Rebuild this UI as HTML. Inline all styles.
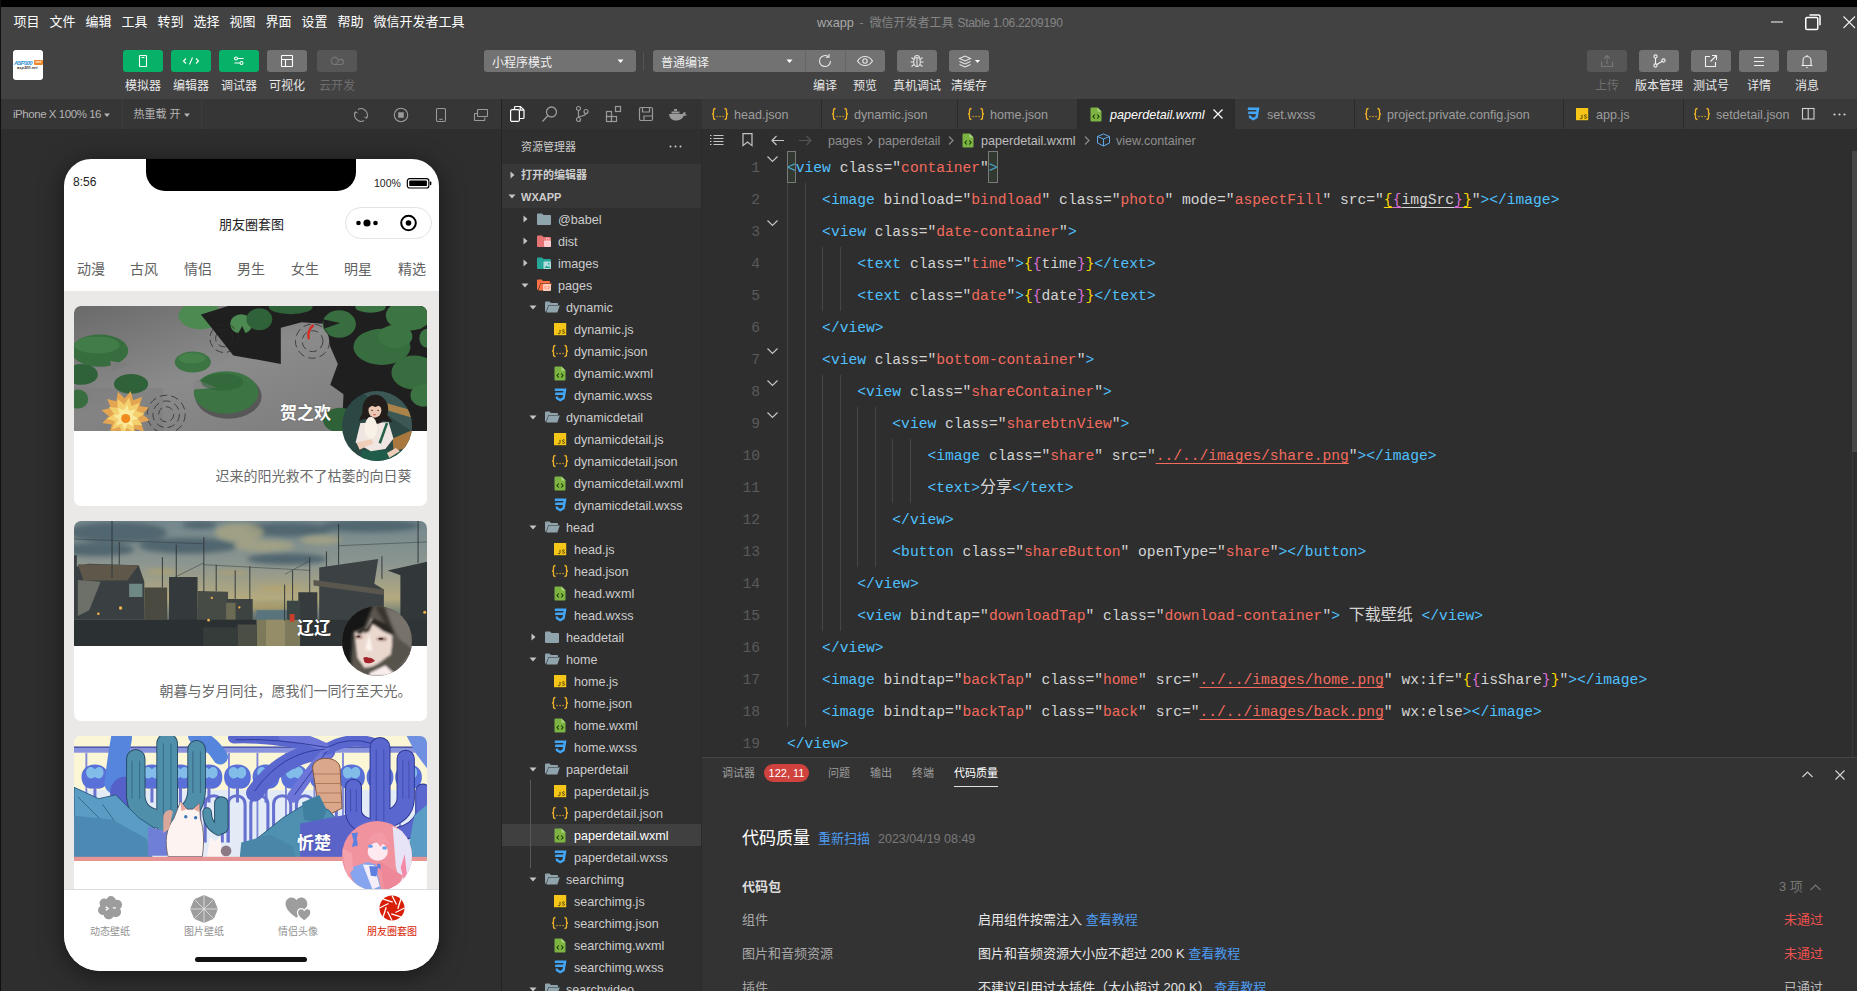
<!DOCTYPE html>
<html lang="zh"><head><meta charset="utf-8"><title>wxapp - 微信开发者工具 Stable 1.06.2209190</title>
<style>
*{box-sizing:border-box;margin:0;padding:0}
html,body{width:1857px;height:991px;overflow:hidden;background:#2e2e2e}
body{position:relative;font-family:"Liberation Sans","Noto Sans CJK SC",sans-serif;font-size:13px;color:#ccc;-webkit-font-smoothing:antialiased}
.abs{position:absolute}
.t{position:absolute;white-space:nowrap;line-height:1}
svg{position:absolute;overflow:visible}
#top{left:0;top:0;width:1857px;height:7px;background:#000}
#left{left:0;top:0;width:1px;height:991px;background:#111}
#bar{left:1px;top:7px;width:1856px;height:92px;background:#424242}
.menu{top:15px;font-size:13px;color:#fff;line-height:14px}
.tb{top:50px;width:40px;height:22px;border-radius:3px;background:#727272}
.tb.g{background:#07b168}
.tb.d{background:#565656}
.tl{top:78.5px;font-size:12px;color:#e8e8e8;line-height:14px;width:80px;text-align:center}
.tl.d{color:#6e6e6e}
.sel{top:50px;height:22px;border-radius:3px;background:#727272;font-size:12px;color:#f0f0f0;line-height:26px;padding-left:8px}
#simbar{left:1px;top:99px;width:500px;height:30px;background:#363636}
#sim{left:1px;top:129px;width:500px;height:862px;background:#2e2e2e}
#div1{left:501px;top:99px;width:1px;height:892px;background:#232323}
#act{left:502px;top:99px;width:200px;height:30px;background:#333}
#exp{left:502px;top:129px;width:200px;height:862px;background:#2f2f2f}
.row{left:0;width:200px;height:22px;font-size:12.6px;color:#ccc;line-height:22px}
#edtabs{left:702px;top:99px;width:1155px;height:30px;background:#393939}
.tab{top:0;height:30px;background:#393939;border-right:1px solid #2b2b2b;font-size:13px;color:#9d9d9d;line-height:30px}
.tab.a{background:#2e2e2e;color:#fff;font-style:italic}
#ed{left:702px;top:129px;width:1155px;height:628px;background:#2e2e2e}
.ln{left:0;width:58px;text-align:right;font-family:"Liberation Mono","Noto Sans CJK SC",monospace;font-size:14.63px;color:#5a5a5a;line-height:32px;height:32px}
.cl{left:85px;font-family:"Liberation Mono","Noto Sans CJK SC",monospace;font-size:14.63px;color:#d4d4d4;line-height:32px;height:32px;white-space:pre}
.tg{color:#4fc1ff}.st{color:#f36b5d}.y{color:#ffd700}.p{color:#da70d6}.u{text-decoration:underline;text-underline-offset:3px}
.ig{background:#454545;width:1px}
#dbg{left:702px;top:757px;width:1155px;height:234px;background:#333;border-top:1px solid #454545}
.lk{color:#4d9bf0}
</style></head><body>
<div id="top" class="abs"></div><div id="bar" class="abs"></div><div class="t menu" style="left:13.5px">项目</div><div class="t menu" style="left:49.5px">文件</div><div class="t menu" style="left:85.5px">编辑</div><div class="t menu" style="left:121.5px">工具</div><div class="t menu" style="left:157.5px">转到</div><div class="t menu" style="left:193.5px">选择</div><div class="t menu" style="left:229.5px">视图</div><div class="t menu" style="left:265.5px">界面</div><div class="t menu" style="left:301.5px">设置</div><div class="t menu" style="left:337.5px">帮助</div><div class="t menu" style="left:373.5px">微信开发者工具</div><div class="t" style="left:817px;top:15.5px;font-size:12.8px;line-height:14px;color:#a8a8a8">wxapp</div><div class="t" style="left:859.5px;top:15.5px;font-size:12px;line-height:14px;color:#858585">-</div><div class="t" style="left:869.5px;top:15.5px;font-size:12px;line-height:14px;color:#858585">微信开发者工具</div><div class="t" style="left:957.5px;top:15.5px;font-size:12px;letter-spacing:-0.3px;line-height:14px;color:#858585">Stable 1.06.2209190</div><svg style="left:1765px;top:10px" width="92" height="26" viewBox="0 0 92 26" fill="none" stroke="#fff" stroke-width="1.5"><path d="M6 12h12" stroke="#aaa" stroke-width="1.8"/><rect x="40.75" y="7.5" width="12" height="12" rx="1.3"/><path d="M44.500 5H53.500a1.500 1.500 0 0 1 1.500 1.500V15.200"/><path d="M78.500 6.500l11.500 11.500M90 6.500l-11.500 11.500" stroke-width="1.1" stroke="#eee"/></svg><div class="abs" style="left:13px;top:50px;width:30px;height:30px;background:#fff;border-radius:3px"></div><div class="t" style="left:14px;top:59.5px;font-size:6px;font-weight:bold;font-style:italic;color:#2f93d2;letter-spacing:-0.75px">ASP300</div><div class="abs" style="left:34px;top:59.5px;width:9px;height:5.5px;background:#f0862a;border-radius:1px"></div><div class="t" style="left:35px;top:60.5px;font-size:3.5px;font-weight:bold;font-style:italic;color:#fff">.net</div><div class="t" style="left:17px;top:66px;font-size:4px;color:#333;font-style:italic;font-weight:bold">asp300.net</div><div class="abs tb g" style="left:123px"><svg width="40" height="22" viewBox="0 0 40 22" fill="none" stroke="#fff" stroke-width="1.1"><rect x="16.5" y="5.500" width="7" height="11" rx="0.5"/><path d="M18.500 7.500h3"/></svg></div><div class="t tl " style="left:103px">模拟器</div><div class="abs tb g" style="left:171px"><svg width="40" height="22" viewBox="0 0 40 22" fill="none" stroke="#fff" stroke-width="1.1"><path d="M15 8.500l-2.500 2.500 2.500 2.500M25 8.500l2.500 2.500-2.500 2.500M21.500 7.500l-3 7"/></svg></div><div class="t tl " style="left:151px">编辑器</div><div class="abs tb g" style="left:219px"><svg width="40" height="22" viewBox="0 0 40 22" fill="none" stroke="#fff" stroke-width="1.1"><path d="M18.6 8.500h6M15.500 13h5.400"/><circle cx="17" cy="8.500" r="1.500"/><circle cx="22.500" cy="13" r="1.500"/></svg></div><div class="t tl " style="left:199px">调试器</div><div class="abs tb " style="left:267px"><svg width="40" height="22" viewBox="0 0 40 22" fill="none" stroke="#fff" stroke-width="1.1"><rect x="14.500" y="5.500" width="11" height="11" rx="0.500"/><path d="M14.500 9.500h11M18.500 9.500v7"/></svg></div><div class="t tl " style="left:247px">可视化</div><div class="abs tb d" style="left:317px"><svg width="40" height="22" viewBox="0 0 40 22" fill="none" stroke="#777" stroke-width="1.1"><path d="M21.300 11.200a3.600 3.600 0 1 0-3 3.300h5.700a2.600 2.600 0 1 0-2.700-3.300c-.5 1.500-1.500 2.500-3 3.300"/></svg></div><div class="t tl d" style="left:297px">云开发</div><div class="abs sel" style="left:484px;width:152px">小程序模式</div><svg style="left:617px;top:59px" width="8" height="5"><path d="M0.500 0.500h6l-3 3.500z" fill="#fff"/></svg><div class="abs" style="left:643px;top:52px;width:1px;height:18px;background:#555"></div><div class="abs sel" style="left:653px;width:232px">普通编译</div><svg style="left:786px;top:59px" width="8" height="5"><path d="M0.500 0.500h6l-3 3.500z" fill="#fff"/></svg><div class="abs" style="left:805px;top:50px;width:1px;height:22px;background:#666"></div><div class="abs" style="left:845px;top:50px;width:1px;height:22px;background:#666"></div><svg style="left:805px;top:51px" width="40" height="20" viewBox="0 0 40 20" fill="none" stroke="#e6e6e6" stroke-width="1.100"><path d="M25.500 10a5.500 5.500 0 1 1-2-4.200"/><path d="M24 3v3.200h-3.200"/></svg><svg style="left:845px;top:51px" width="40" height="20" viewBox="0 0 40 20" fill="none" stroke="#e6e6e6" stroke-width="1.100"><path d="M12.500 10c2-3.300 5-4.500 7.500-4.500s5.500 1.200 7.500 4.500c-2 3.300-5 4.500-7.500 4.500s-5.500-1.200-7.500-4.500z"/><circle cx="20" cy="10" r="2.200"/></svg><div class="abs tb" style="left:897px"><svg style="top:1px" width="40" height="20" viewBox="0 0 40 20" fill="none" stroke="#e6e6e6" stroke-width="1.100"><ellipse cx="20" cy="11" rx="3.300" ry="4.500"/><path d="M17.500 7a2.500 2.500 0 0 1 5 0M16.700 11h-3.200M23.300 11h3.200M17 8.500l-2.500-2M23 8.500l2.500-2M17 13.500l-2.500 2M23 13.500l2.500 2M20 6.500v9"/></svg></div><div class="abs tb" style="left:949px"><svg style="top:1px" width="40" height="20" viewBox="0 0 40 20" fill="none" stroke="#e6e6e6" stroke-width="1.100"><path d="M10.500 7.500l5.500-2.500 5.500 2.500-5.500 2.500zM10.500 10.500l5.500 2.500 5.500-2.500M10.500 13.500l5.500 2.500 5.500-2.500"/><path d="M26 9h5l-2.500 3z" fill="#fff" stroke="none"/></svg></div><div class="t tl" style="left:785px">编译</div><div class="t tl" style="left:825px">预览</div><div class="t tl" style="left:877px">真机调试</div><div class="t tl" style="left:929px">清缓存</div><div class="abs tb d" style="left:1587px"><svg width="40" height="22" viewBox="0 0 40 22" fill="none" stroke="#777" stroke-width="1.100"><path d="M14.500 11.500v5h11v-5M20 14v-8M17 8.500l3-3 3 3"/></svg></div><div class="t tl d" style="left:1567px">上传</div><div class="abs tb " style="left:1639px"><svg width="40" height="22" viewBox="0 0 40 22" fill="none" stroke="#f0f0f0" stroke-width="1.100"><circle cx="16.500" cy="6.500" r="1.600"/><circle cx="16.500" cy="15.500" r="1.600"/><circle cx="24.500" cy="10.500" r="1.600"/><path d="M16.500 8.100v5.800M17.800 14.500l5.500-3.200"/></svg></div><div class="t tl " style="left:1619px">版本管理</div><div class="abs tb " style="left:1691px"><svg width="40" height="22" viewBox="0 0 40 22" fill="none" stroke="#f0f0f0" stroke-width="1.100"><path d="M19 6.500h-4.500v10h10v-4.500M21 5.500h4.500v4.500M25.500 5.500l-6 6"/></svg></div><div class="t tl " style="left:1671px">测试号</div><div class="abs tb " style="left:1739px"><svg width="40" height="22" viewBox="0 0 40 22" fill="none" stroke="#f0f0f0" stroke-width="1.100"><path d="M15 7.500h10M15 11.500h10M15 15.500h10"/></svg></div><div class="t tl " style="left:1719px">详情</div><div class="abs tb " style="left:1787px"><svg width="40" height="22" viewBox="0 0 40 22" fill="none" stroke="#f0f0f0" stroke-width="1.100"><path d="M14.500 15.500h11M16 15.500v-5a4 4 0 0 1 8 0v5M20 6.500v-1.500M19.300 17.500h1.400"/></svg></div><div class="t tl " style="left:1767px">消息</div><div id="simbar" class="abs"></div><div id="sim" class="abs"></div><div id="div1" class="abs"></div><div class="t" style="left:13px;top:108px;font-size:11.5px;letter-spacing:-0.45px;color:#b4b4b4;line-height:12px">iPhone X 100% 16</div><svg style="left:104px;top:112.5px" width="7" height="5"><path d="M0 0.500h6l-3 3.500z" fill="#b4b4b4"/></svg><div class="abs" style="left:122px;top:99px;width:1px;height:30px;background:#3d3d3d"></div><div class="abs" style="left:201px;top:99px;width:1px;height:30px;background:#3d3d3d"></div><div class="t" style="left:133.5px;top:107px;font-size:11px;color:#b4b4b4;line-height:14px">热重载 开</div><svg style="left:183.5px;top:112.5px" width="7" height="5"><path d="M0 0.500h6l-3 3.500z" fill="#b4b4b4"/></svg><svg style="left:353px;top:107px" width="16" height="16" viewBox="0 0 16 16" fill="none" stroke="#9a9a9a" stroke-width="1.1"><path d="M4.85 2.54A6.3 6.3 0 0 1 13.46 11.15M11.15 13.46A6.3 6.3 0 0 1 2.54 4.85"/><path d="M11.4 10.1l2.1 1.2 1.2-2.1M1.3 6.9l1.2-2.1 2.1 1.2" stroke-width="1"/></svg><svg style="left:393px;top:107px" width="16" height="16" viewBox="0 0 16 16" fill="none" stroke="#9a9a9a" stroke-width="1.1"><circle cx="8" cy="8" r="6.7"/><rect x="5.2" y="5.2" width="5.6" height="5.6" rx="0.5" fill="#9a9a9a" stroke="none"/></svg><svg style="left:433px;top:107px" width="16" height="16" viewBox="0 0 16 16" fill="none" stroke="#9a9a9a" stroke-width="1.1"><rect x="3.5" y="1.5" width="9" height="13" rx="1.2"/><path d="M6.3 12.3h3.4"/></svg><svg style="left:473px;top:107px" width="16" height="16" viewBox="0 0 16 16" fill="none" stroke="#9a9a9a" stroke-width="1.1"><rect x="4.5" y="2.5" width="10" height="7" rx="0.6"/><path d="M4 6.5h-2a.5.5 0 0 0-.5.5v6a.5.5 0 0 0 .5.5h9.300a.5.5 0 0 0 .5-.5v-2.500"/></svg><div class="abs" id="phone" style="left:64px;top:159px;width:375px;height:812px;background:#fff;border-radius:27px 27px 36px 36px;overflow:hidden;box-shadow:0 4px 24px rgba(0,0,0,.5)"><div class="abs" style="left:82px;top:0;width:210px;height:32px;background:#000;border-radius:0 0 19px 19px"></div><div class="t" style="left:9px;top:17px;font-size:12px;color:#222;line-height:12px">8:56</div><div class="t" style="left:310px;top:18.500px;font-size:10.500px;color:#222;line-height:11px">100%</div><svg style="left:342px;top:18.5px" width="27" height="11" viewBox="0 0 28 12"><rect x="0.700" y="0.700" width="23.500" height="10.200" rx="2.500" fill="none" stroke="#000" stroke-width="1.300"/><rect x="2.800" y="2.800" width="19.300" height="6" rx="1" fill="#000"/><rect x="25.300" y="3.800" width="1.600" height="4" rx="0.800" fill="#000"/></svg><div class="t" style="left:0;width:375px;text-align:center;top:59px;font-size:13px;color:#222;line-height:14px">朋友圈套图</div><div class="abs" style="left:281px;top:48px;width:87px;height:32px;border:1px solid #e3e3e3;border-radius:16px"></div><svg style="left:281px;top:48px" width="87" height="32" viewBox="0 0 87 32"><circle cx="13.500" cy="16" r="2.300" fill="#000"/><circle cx="22" cy="16" r="3.600" fill="#000"/><circle cx="30.500" cy="16" r="2.300" fill="#000"/><circle cx="63.500" cy="16" r="7.300" fill="none" stroke="#000" stroke-width="2"/><circle cx="63.500" cy="16" r="2.800" fill="#000"/></svg><div class="t" style="left:13px;top:102px;font-size:14px;color:#626262;line-height:16px">动漫</div><div class="t" style="left:66px;top:102px;font-size:14px;color:#626262;line-height:16px">古风</div><div class="t" style="left:120px;top:102px;font-size:14px;color:#626262;line-height:16px">情侣</div><div class="t" style="left:173px;top:102px;font-size:14px;color:#626262;line-height:16px">男生</div><div class="t" style="left:227px;top:102px;font-size:14px;color:#626262;line-height:16px">女生</div><div class="t" style="left:280px;top:102px;font-size:14px;color:#626262;line-height:16px">明星</div><div class="t" style="left:334px;top:102px;font-size:14px;color:#626262;line-height:16px">精选</div><div class="abs" style="left:0;top:132px;width:375px;height:600px;background:#ebe9e7"></div><div class="abs" style="left:10px;top:147px;width:353px;height:200px;background:#fff;border-radius:7px;overflow:hidden"><svg style="left:0;top:0;overflow:hidden" width="353" height="125" viewBox="0 0 1857 658" preserveAspectRatio="none"><defs><linearGradient id="p1" x1="0" y1="0" x2="1" y2="1"><stop offset="0" stop-color="#6a6a6a"/><stop offset=".45" stop-color="#8b8b8b"/><stop offset="1" stop-color="#787878"/></linearGradient></defs>
<rect width="1857" height="658" fill="url(#p1)"/>
<path d="M0 430h470v228h-470z" fill="#767676" opacity=".35"/>
<ellipse cx="665" cy="50" rx="115" ry="72" fill="#4c8a52"/>
<path d="M668 45l60 75 110 140 250 45v-190l110-30 130 10 20 120 40 90-40 110 70 50-10 200h460v-670h-1040z" fill="#1f1f1f"/>
<path d="M668 45l90 40-10 50z" fill="#1f1f1f"/>
<ellipse cx="880" cy="95" rx="58" ry="52" fill="#4c8a52"/><ellipse cx="975" cy="70" rx="68" ry="58" fill="#2f6238"/>
<path d="M860 150l25-45 20 45z" fill="#1f1f1f"/>
<ellipse cx="1140" cy="5" rx="115" ry="38" fill="#2f6238"/>
<ellipse cx="1395" cy="95" rx="88" ry="72" fill="#386e3f"/><path d="M1310 70l90 20-85 30z" fill="#1f1f1f"/>
<ellipse cx="1560" cy="5" rx="80" ry="30" fill="#3c7443"/>
<ellipse cx="1760" cy="50" rx="120" ry="80" fill="#3c7443"/>
<ellipse cx="1620" cy="215" rx="150" ry="95" fill="#386e3f"/><ellipse cx="1690" cy="160" rx="90" ry="60" fill="#3c7443"/>
<ellipse cx="1857" cy="170" rx="40" ry="50" fill="#3c7443"/>
<ellipse cx="1790" cy="350" rx="120" ry="90" fill="#386e3f"/><ellipse cx="1840" cy="470" rx="70" ry="60" fill="#3c7443"/>
<ellipse cx="1400" cy="600" rx="90" ry="65" fill="#2f6238"/>
<ellipse cx="135" cy="235" rx="150" ry="85" fill="#386e3f"/><ellipse cx="120" cy="205" rx="120" ry="45" fill="#4c8a52" opacity=".5"/>
<path d="M190 290l100 15-90 40z" fill="#7d7d7d"/>
<ellipse cx="40" cy="360" rx="85" ry="55" fill="#2f6238"/>
<ellipse cx="300" cy="410" rx="90" ry="52" fill="#2f6238"/>
<ellipse cx="20" cy="490" rx="55" ry="50" fill="#386e3f"/>
<ellipse cx="625" cy="295" rx="95" ry="55" fill="#3c7443"/><ellipse cx="620" cy="275" rx="70" ry="28" fill="#4c8a52" opacity=".6"/>
<ellipse cx="800" cy="465" rx="175" ry="118" fill="#2a2a2a" opacity=".5" transform="translate(12,10)"/>
<ellipse cx="800" cy="455" rx="170" ry="112" fill="#3c7443"/><path d="M640 385l110 45-120 10z" fill="#858585"/>
<ellipse cx="780" cy="400" rx="110" ry="45" fill="#2f6238" opacity=".6"/>
<g fill="none" stroke="#2a2a2a" stroke-width="5" stroke-dasharray="40 22" opacity=".8"><circle cx="790" cy="170" r="45"/><circle cx="790" cy="170" r="75"/><circle cx="1255" cy="185" r="55"/><circle cx="1255" cy="185" r="90"/><circle cx="485" cy="570" r="40"/><circle cx="485" cy="570" r="70"/><circle cx="485" cy="570" r="100"/></g>
<path d="M1260 100c-25 20-30 50-25 75" stroke="#d42a20" stroke-width="12" fill="none"/>
<g><path d="M399 601L351 614L369 661L321 648L313 698L277 663L246 702L233 654L186 672L199 624L149 616L184 580L145 549L193 536L175 489L223 502L231 452L267 487L298 448L311 496L358 478L345 526L395 534L360 570z" fill="#e4a552"/><path d="M360 628L315 625L315 670L280 641L254 678L242 634L199 649L216 607L173 593L211 569L184 532L229 535L229 490L264 519L290 482L302 526L345 511L328 553L371 567L333 591z" fill="#f3cf6e"/><path d="M338 592L305 603L314 636L283 621L265 651L254 618L221 627L236 596L206 578L239 567L230 534L261 549L279 519L290 552L323 543L308 574z" fill="#fae99a"/><circle cx="272" cy="592" r="24" fill="#f08a1c"/></g></svg><div class="t" style="right:96px;top:99px;font-size:17px;font-weight:bold;color:#fff;line-height:18px;text-shadow:0 0 2px rgba(0,0,0,.25)">贺之欢</div><div class="t" style="right:15.5px;top:162px;font-size:14px;color:#6a6a6a;line-height:16px">迟来的阳光救不了枯萎的向日葵</div><svg style="left:268px;top:85px;overflow:hidden;border-radius:35px" width="70" height="70" viewBox="62 62 868 868"><rect x="0" y="0" width="991" height="991" fill="#2c4844"/>
<path d="M300 62h630v500l-300-200z" fill="#3b5856"/>
<path d="M615 215l280 75 25 100-300-90z" fill="#a98349"/><path d="M690 650l240-100v200l-230 60z" fill="#a8783f"/>
<path d="M300 800h500v130h-500z" fill="#1f5c49"/>
<path d="M290 460l350-10 60 200-100 130-180 30-190-110z" fill="#efe6e2"/>
<path d="M620 460l-90 250" stroke="#24604a" stroke-width="32"/>
<ellipse cx="475" cy="290" rx="160" ry="180" fill="#221d1b"/><path d="M330 300l-60 130 90-30zM600 330l90 120-110-20z" fill="#221d1b"/>
<ellipse cx="470" cy="305" rx="80" ry="88" fill="#ecc7b4"/><path d="M385 215h180l-10 50-40-20-40 15-40-15-40 25z" fill="#221d1b"/><ellipse cx="435" cy="300" rx="12" ry="7" fill="#3a2a26"/><ellipse cx="510" cy="300" rx="12" ry="7" fill="#3a2a26"/><ellipse cx="465" cy="355" rx="20" ry="9" fill="#d8605a"/>
<ellipse cx="420" cy="520" rx="78" ry="140" fill="#f8f1e6"/>
<path d="M240 700l190-40 20 50-170 80z" fill="#f0cdb8"/><path d="M620 830l110-60 50 40-130 80z" fill="#f0cdb8"/></svg></div><div class="abs" style="left:10px;top:362px;width:353px;height:200px;background:#fff;border-radius:7px;overflow:hidden"><svg style="left:0;top:0;overflow:hidden" width="353" height="125" viewBox="0 0 1857 658" preserveAspectRatio="none"><defs><linearGradient id="p2" x1="0" y1="0" x2="0" y2="1"><stop offset="0" stop-color="#73878d"/><stop offset=".35" stop-color="#8d9690"/><stop offset=".62" stop-color="#b4aa7e"/><stop offset=".75" stop-color="#6c7a78"/><stop offset="1" stop-color="#3a4040"/></linearGradient></defs>
<rect width="1857" height="658" fill="url(#p2)"/>
<filter id="bl2"><feGaussianBlur stdDeviation="14"/></filter><g fill="#51666f" filter="url(#bl2)"><ellipse cx="230" cy="60" rx="260" ry="55"/><ellipse cx="600" cy="130" rx="260" ry="42"/><ellipse cx="660" cy="20" rx="90" ry="22"/><ellipse cx="1130" cy="45" rx="230" ry="36"/><ellipse cx="1560" cy="25" rx="260" ry="34"/><ellipse cx="1120" cy="200" rx="210" ry="30"/><ellipse cx="120" cy="150" rx="200" ry="35"/></g>
<g fill="#a9a583" opacity=".8" filter="url(#bl2)"><ellipse cx="870" cy="60" rx="130" ry="50"/><ellipse cx="1000" cy="130" rx="160" ry="30"/><ellipse cx="1300" cy="100" rx="110" ry="25"/></g>
<g fill="#c0a65e" opacity=".7" filter="url(#bl2)"><ellipse cx="460" cy="265" rx="80" ry="10"/><ellipse cx="1080" cy="355" rx="110" ry="10"/><ellipse cx="1000" cy="450" rx="200" ry="14"/><ellipse cx="830" cy="270" rx="90" ry="8"/></g>
<path d="M960 470h190v60h-190z" fill="#5a747d"/>
<path d="M960 520h230v138h-230z" fill="#7d7a5c"/><path d="M1010 520h100v138h-100z" fill="#9a926a" opacity=".8"/>
<path d="M0 180h15v60l60-15 265 8 30 85v200h-370z" fill="#3a4042"/><path d="M20 228l320 5-60 80h-230z" fill="#5f584a"/><path d="M20 310l120 10-60 150-60 30z" fill="#6d7069"/>
<path d="M290 330h70v70h-70z" fill="#6d8885"/>
<path d="M370 350h120v170h-120z" fill="#4b4a40"/>
<path d="M500 295h150v230h-150z" fill="#343a3c"/>
<path d="M650 368l160 5v150h-160z" fill="#464b45"/><path d="M800 410h140v130h-140z" fill="#3d4341"/><path d="M800 430h50v90h-50z" fill="#6a6a55"/>
<path d="M1290 245l310-45-20 130 50 30v180h-340z" fill="#3c4244"/><path d="M1260 310l370 50v30l-370-50z" fill="#5a574e"/>
<path d="M1180 375h100v150h-100z" fill="#363c3e"/><path d="M1120 420h70v100h-70z" fill="#3b4543"/>
<path d="M1650 260l207-45v340h-140v-270z" fill="#32383a"/>
<path d="M0 520h960v138h-960z" fill="#2b3133"/><path d="M1190 520h667v138h-667z" fill="#2f3537"/>
<path d="M860 545h100v113h-100z" fill="#4a4e45"/><path d="M680 560h180v98h-180z" fill="#363c3a"/>
<g stroke="#30373a" stroke-width="5"><path d="M200 0v300M238 110v120M465 190v160M538 125v170M683 85v290M748 230v140M848 260v150M925 238v180M1108 335v190M1150 260v160M1240 190v190M1328 160v85M1392 15v215M1620 185v120M1810 0v220"/></g>
<g stroke="#30373a" stroke-width="2.500" fill="none"><path d="M0 95l683 25M683 220l-180 90M683 230l560 30M1392 130l465-20M1240 210l-130 70"/></g>
<g fill="#f0b050"><circle cx="245" cy="458" r="9"/><circle cx="128" cy="488" r="7"/><circle cx="708" cy="522" r="7"/><circle cx="1845" cy="480" r="8"/><circle cx="870" cy="455" r="6"/><circle cx="725" cy="405" r="6"/></g>
<path d="M1135 490h25v40h-25z" fill="#c8402c"/></svg><div class="t" style="right:96px;top:99px;font-size:17px;font-weight:bold;color:#fff;line-height:18px;text-shadow:0 0 2px rgba(0,0,0,.25)">辽辽</div><div class="t" style="right:15.5px;top:162px;font-size:14px;color:#6a6a6a;line-height:16px">朝暮与岁月同往，愿我们一同行至天光。</div><svg style="left:268px;top:85px;overflow:hidden;border-radius:35px" width="70" height="70" viewBox="62 62 868 868"><defs><filter id="b2"><feGaussianBlur stdDeviation="10"/></filter><filter id="b2b"><feGaussianBlur stdDeviation="22"/></filter></defs>
<rect x="0" y="0" width="991" height="991" fill="#5b564e"/>
<g filter="url(#b2b)"><path d="M0 0h470l-130 330-140 60-30 420-170 181z" fill="#161412"/><path d="M560 62l370 150v718h-230l60-480z" fill="#77726a"/><path d="M470 62h120l130 360-60-20z" fill="#3a352f"/></g>
<g filter="url(#b2)"><path d="M215 385l140-30 70-140 130 150 130 60-5 230-210 150-130 30-90-130z" fill="#ead8cf"/>
<path d="M350 600l50-190 40 210z" fill="#fdf4ef"/>
<path d="M440 215l-110 190 70-30 40-90 150 95 110 45-70-130z" fill="#2a2622"/>
<path d="M228 395l110-60 30 20-80 60z" fill="#2a2622"/>
<ellipse cx="270" cy="445" rx="50" ry="20" fill="#9a7468"/><ellipse cx="555" cy="470" rx="65" ry="22" fill="#9a7468"/>
<path d="M700 420l-40 290-260 120-60 100h360l240-330z" fill="#57524b"/>
<path d="M410 890l190-90 140 130h-340z" fill="#f8edea"/></g>
<path d="M325 705c30-15 50-10 70 0 25-5 50 10 75 35-40 35-100 40-130 20z" fill="#a3252b"/>
<ellipse cx="265" cy="440" rx="24" ry="12" fill="#4a3a34"/><ellipse cx="545" cy="468" rx="30" ry="13" fill="#4a3a34"/></svg></div><div class="abs" style="left:10px;top:577px;width:353px;height:200px;background:#fff;border-radius:7px;overflow:hidden"><svg style="left:0;top:0;overflow:hidden" width="353" height="125" viewBox="0 0 1857 658" preserveAspectRatio="none"><rect width="1857" height="658" fill="#fbf6d6"/>
<rect y="285" width="1857" height="373" fill="#e3ebf7"/>
<rect y="62" width="1857" height="26" fill="#8a94de"/><rect y="55" width="1857" height="8" fill="#4a55a8"/>
<path d="M60 90h10v470h-10z" fill="#7f88d6"/><path d="M210 90h10v470h-10z" fill="#7f88d6"/><path d="M360 90h10v470h-10z" fill="#7f88d6"/><path d="M510 90h10v470h-10z" fill="#7f88d6"/><path d="M660 90h10v470h-10z" fill="#7f88d6"/><path d="M810 90h10v470h-10z" fill="#7f88d6"/><path d="M960 90h10v470h-10z" fill="#7f88d6"/><path d="M1110 90h10v470h-10z" fill="#7f88d6"/><path d="M1260 90h10v470h-10z" fill="#7f88d6"/><path d="M1410 90h10v470h-10z" fill="#7f88d6"/><path d="M1560 90h10v470h-10z" fill="#7f88d6"/><path d="M1710 90h10v470h-10z" fill="#7f88d6"/><g transform="translate(110,0)"><path d="M0 150c-45 0-75 30-70 75 5 40 35 60 70 50 35 10 65-10 70-50 5-45-25-75-70-75z" fill="#5870d8"/><path d="M0 175c-25-25-50-5-45 25 5 25 30 30 45 15 15 15 40 10 45-15 5-30-20-50-45-25z" fill="#82bdea"/><path d="M-8 270h16v80h-16z" fill="#6a74d0"/></g><g transform="translate(260,0)"><path d="M0 150c-45 0-75 30-70 75 5 40 35 60 70 50 35 10 65-10 70-50 5-45-25-75-70-75z" fill="#5870d8"/><path d="M0 175c-25-25-50-5-45 25 5 25 30 30 45 15 15 15 40 10 45-15 5-30-20-50-45-25z" fill="#82bdea"/><path d="M-8 270h16v80h-16z" fill="#6a74d0"/></g><g transform="translate(410,0)"><path d="M0 150c-45 0-75 30-70 75 5 40 35 60 70 50 35 10 65-10 70-50 5-45-25-75-70-75z" fill="#5870d8"/><path d="M0 175c-25-25-50-5-45 25 5 25 30 30 45 15 15 15 40 10 45-15 5-30-20-50-45-25z" fill="#82bdea"/><path d="M-8 270h16v80h-16z" fill="#6a74d0"/></g><g transform="translate(560,0)"><path d="M0 150c-45 0-75 30-70 75 5 40 35 60 70 50 35 10 65-10 70-50 5-45-25-75-70-75z" fill="#5870d8"/><path d="M0 175c-25-25-50-5-45 25 5 25 30 30 45 15 15 15 40 10 45-15 5-30-20-50-45-25z" fill="#82bdea"/><path d="M-8 270h16v80h-16z" fill="#6a74d0"/></g><g transform="translate(710,0)"><path d="M0 150c-45 0-75 30-70 75 5 40 35 60 70 50 35 10 65-10 70-50 5-45-25-75-70-75z" fill="#5870d8"/><path d="M0 175c-25-25-50-5-45 25 5 25 30 30 45 15 15 15 40 10 45-15 5-30-20-50-45-25z" fill="#82bdea"/><path d="M-8 270h16v80h-16z" fill="#6a74d0"/></g><g transform="translate(860,0)"><path d="M0 150c-45 0-75 30-70 75 5 40 35 60 70 50 35 10 65-10 70-50 5-45-25-75-70-75z" fill="#5870d8"/><path d="M0 175c-25-25-50-5-45 25 5 25 30 30 45 15 15 15 40 10 45-15 5-30-20-50-45-25z" fill="#82bdea"/><path d="M-8 270h16v80h-16z" fill="#6a74d0"/></g><g transform="translate(1010,0)"><path d="M0 150c-45 0-75 30-70 75 5 40 35 60 70 50 35 10 65-10 70-50 5-45-25-75-70-75z" fill="#5870d8"/><path d="M0 175c-25-25-50-5-45 25 5 25 30 30 45 15 15 15 40 10 45-15 5-30-20-50-45-25z" fill="#82bdea"/><path d="M-8 270h16v80h-16z" fill="#6a74d0"/></g><g transform="translate(1160,0)"><path d="M0 150c-45 0-75 30-70 75 5 40 35 60 70 50 35 10 65-10 70-50 5-45-25-75-70-75z" fill="#5870d8"/><path d="M0 175c-25-25-50-5-45 25 5 25 30 30 45 15 15 15 40 10 45-15 5-30-20-50-45-25z" fill="#82bdea"/><path d="M-8 270h16v80h-16z" fill="#6a74d0"/></g><g transform="translate(1310,0)"><path d="M0 150c-45 0-75 30-70 75 5 40 35 60 70 50 35 10 65-10 70-50 5-45-25-75-70-75z" fill="#5870d8"/><path d="M0 175c-25-25-50-5-45 25 5 25 30 30 45 15 15 15 40 10 45-15 5-30-20-50-45-25z" fill="#82bdea"/><path d="M-8 270h16v80h-16z" fill="#6a74d0"/></g><g transform="translate(1460,0)"><path d="M0 150c-45 0-75 30-70 75 5 40 35 60 70 50 35 10 65-10 70-50 5-45-25-75-70-75z" fill="#5870d8"/><path d="M0 175c-25-25-50-5-45 25 5 25 30 30 45 15 15 15 40 10 45-15 5-30-20-50-45-25z" fill="#82bdea"/><path d="M-8 270h16v80h-16z" fill="#6a74d0"/></g><g transform="translate(1610,0)"><path d="M0 150c-45 0-75 30-70 75 5 40 35 60 70 50 35 10 65-10 70-50 5-45-25-75-70-75z" fill="#5870d8"/><path d="M0 175c-25-25-50-5-45 25 5 25 30 30 45 15 15 15 40 10 45-15 5-30-20-50-45-25z" fill="#82bdea"/><path d="M-8 270h16v80h-16z" fill="#6a74d0"/></g><g transform="translate(1760,0)"><path d="M0 150c-45 0-75 30-70 75 5 40 35 60 70 50 35 10 65-10 70-50 5-45-25-75-70-75z" fill="#5870d8"/><path d="M0 175c-25-25-50-5-45 25 5 25 30 30 45 15 15 15 40 10 45-15 5-30-20-50-45-25z" fill="#82bdea"/><path d="M-8 270h16v80h-16z" fill="#6a74d0"/></g><path d="M690 560v-200c0-60 90-60 90 0v200" fill="none" stroke="#6670cf" stroke-width="16"/><path d="M810 560v-200c0-60 90-60 90 0v200" fill="none" stroke="#6670cf" stroke-width="16"/><path d="M930 560v-200c0-60 90-60 90 0v200" fill="none" stroke="#6670cf" stroke-width="16"/><path d="M1050 560v-200c0-60 90-60 90 0v200" fill="none" stroke="#6670cf" stroke-width="16"/><path d="M1170 560v-200c0-60 90-60 90 0v200" fill="none" stroke="#6670cf" stroke-width="16"/><path d="M1290 560v-200c0-60 90-60 90 0v200" fill="none" stroke="#6670cf" stroke-width="16"/>
<g fill="none" stroke-linecap="round">
<path d="M250 10Q230 120 215 250" stroke="#5585dc" stroke-width="110"/>
<path d="M640 0Q720 30 770 110" stroke="#5585dc" stroke-width="80"/>
<path d="M1330 70Q1050 0 840 10" stroke="#5a67cf" stroke-width="60"/>
<path d="M1330 80Q1100 90 950 300" stroke="#5a67cf" stroke-width="90"/>
<path d="M1330 90Q1230 200 1150 320" stroke="#6c76d8" stroke-width="60"/>
<path d="M1330 70Q1450 0 1580 40" stroke="#5a67cf" stroke-width="60"/>
<path d="M1320 60Q1200 0 1100 0" stroke="#6c76d8" stroke-width="50"/>
</g>
<g stroke="#2f3a98" stroke-width="5" fill="none"><path d="M1320 70Q1100 80 950 290M1330 60Q1050 10 850 20M1330 80Q1240 200 1160 310M1330 60Q1450 0 1570 40"/></g><path d="M1255 170c0-70 140-70 145 0l10 210-60 30-60-10z" fill="#dba78a" stroke="#7a5040" stroke-width="5"/><path d="M1262 200h140M1268 250h135M1275 300h130M1285 350h120" stroke="#b07a5c" stroke-width="6"/>
<ellipse cx="265" cy="300" rx="75" ry="85" fill="#5560c8"/>
<g fill="none" stroke-linecap="round" stroke="#274a66">
<path d="M325 120V320Q335 440 490 440" stroke-width="102"/><path d="M490 40V470" stroke-width="114"/><path d="M645 70V290Q640 400 540 425" stroke-width="98"/>
<path d="M775 355V480" stroke-width="76"/><path d="M700 400Q700 470 760 500" stroke-width="50"/>
</g>
<g fill="none" stroke-linecap="round" stroke="#4f8fa9">
<path d="M325 120V320Q335 440 490 440" stroke-width="92"/><path d="M490 40V470" stroke-width="104"/><path d="M645 70V290Q640 400 540 425" stroke-width="88"/>
<path d="M775 355V480" stroke-width="66"/><path d="M700 400Q700 470 760 500" stroke-width="40"/>
</g>
<g stroke="#2f5f7c" stroke-width="4" fill="none"><path d="M305 130V330M345 130V330M470 40V440M510 40V440M625 80V300M665 80V300"/></g>
<path d="M0 270l130 60 90-20 120 120 90 60-30 130-400 38z" fill="#5a9cc4" stroke="#2a5a80" stroke-width="5"/><g stroke="#2a5a80" stroke-width="4" fill="none"><path d="M20 320l120 120M60 460l140 60M150 360l100 140M0 540l160 40M240 470l60 130"/></g><path d="M0 420l200 20 180 100 40 118h-420z" fill="#4c8ab4"/>
<path d="M390 480l100 20v130h-100z" fill="#6f7fd8"/>
<path d="M1100 430l130-80 110 40 100 120-60 148h-500l60-100z" fill="#4f8fb0" stroke="#2a5a80" stroke-width="5"/><path d="M1200 350l90-40 40 80-30 70-90-20z" fill="#3f80a0"/>
<path d="M1190 460l260-50 110 100v148h-370z" fill="#5a64c8"/>
<path d="M880 560l150-40 120 60 20 78h-300z" fill="#4a86a8"/>
<g fill="none" stroke-linecap="round" stroke="#2b3590">
<path d="M1610 60V658" stroke-width="110"/><path d="M1470 270V400Q1480 475 1600 485" stroke-width="90"/><path d="M1745 120V330Q1740 420 1620 445" stroke-width="96"/><path d="M1835 290V420Q1800 500 1700 520" stroke-width="80"/>
</g>
<g fill="none" stroke-linecap="round" stroke="#5a67cf">
<path d="M1610 60V658" stroke-width="100"/><path d="M1470 270V400Q1480 475 1600 485" stroke-width="80"/><path d="M1745 120V330Q1740 420 1620 445" stroke-width="86"/><path d="M1835 290V420Q1800 500 1700 520" stroke-width="70"/>
</g>
<g stroke="#3a45a8" stroke-width="4" fill="none"><path d="M1590 70V640M1630 70V640M1455 280V400M1485 280V400M1730 130V330M1762 130V330"/></g>
<path d="M1750 0h107v170l-60-80z" fill="#6f8fe0"/><path d="M1790 420l67-60v298h-110z" fill="#5a9cc4"/>
<path d="M560 345l35 40h30l35-30 5 80c20 60 20 130 10 200h-180c-20-80-10-150 30-200z" fill="#fdf3f0" stroke="#5a4a55" stroke-width="4"/><path d="M470 420c10-30 40-40 50-20l-20 90-30 20z" fill="#d9a89a"/><path d="M560 345l30 40-25 10zM660 355l-30 30 28 15z" fill="#e8a79a"/>
<circle cx="588" cy="425" r="9" fill="#3c78b8"/><circle cx="640" cy="430" r="9" fill="#3c78b8"/>
<path d="M715 530l25 25 30-25 10 105h-80z" fill="#fdf3f0"/><circle cx="800" cy="605" r="28" fill="#8b7a86"/>
<rect y="636" width="1857" height="22" fill="#e79594"/></svg><div class="t" style="right:96px;top:99px;font-size:17px;font-weight:bold;color:#fff;line-height:18px;text-shadow:0 0 2px rgba(0,0,0,.25)">忻楚</div><div class="t" style="right:15.5px;top:162px;font-size:14px;color:#6a6a6a;line-height:16px"></div><svg style="left:268px;top:85px;overflow:hidden;border-radius:35px" width="70" height="70" viewBox="62 62 868 868"><defs><filter id="b3"><feGaussianBlur stdDeviation="9"/></filter></defs>
<rect x="0" y="0" width="991" height="991" fill="#f1939f"/>
<g filter="url(#b3)"><path d="M690 130l240 110v690h-120l-80-300z" fill="#e6e4f6"/>
<path d="M790 640l50-170 25 250-40 60z" fill="#f58aa8"/>
<ellipse cx="505" cy="440" rx="125" ry="115" fill="#fde9ef"/>
<path d="M380 330l60-110 120-20 90 150-60-30-50 60-60-70z" fill="#f29aa6"/>
<ellipse cx="415" cy="375" rx="30" ry="22" fill="#6aa0e8"/><ellipse cx="590" cy="398" rx="30" ry="22" fill="#6aa0e8"/>
<path d="M180 215l80-10-15 80 15 80-75 20 20-80z" fill="#5d80e0"/>
<path d="M140 650l240-80 100 30 70 330h-300z" fill="#86a5ee"/><path d="M320 600l140 10 70 260-90 40z" fill="#f3eef8"/><path d="M400 620l110 10-20 120-70-10z" fill="#5d7fe0"/><path d="M500 590l60 10-10 60-50-20z" fill="#5d7fe0"/>
<path d="M530 560l170 110 120 70-60 130-170 60z" fill="#ee8898"/>
<path d="M62 400l120 60 20 200-80 100z" fill="#f4a3ad"/></g></svg></div><div class="abs" style="left:0;top:730px;width:375px;height:82px;background:#fff;border-top:1px solid #dcdcdc"></div><div class="t" style="left:6px;width:80px;text-align:center;top:767px;font-size:10px;color:#929292;line-height:11px">动态壁纸</div><div class="t" style="left:100px;width:80px;text-align:center;top:767px;font-size:10px;color:#929292;line-height:11px">图片壁纸</div><div class="t" style="left:194px;width:80px;text-align:center;top:767px;font-size:10px;color:#929292;line-height:11px">情侣头像</div><div class="t" style="left:288px;width:80px;text-align:center;top:767px;font-size:10px;color:#d81e06;line-height:11px">朋友圈套图</div><svg style="left:31px;top:734px" width="31" height="31" viewBox="0 0 26 26"><path d="M13 2.500c2.500 0 4 1.500 4.600 3.300 2-.4 4 .5 4.800 2.500.9 2.200-.2 4-1.500 5 1.200 1.600 1.400 3.800 0 5.400-1.500 1.700-3.800 1.800-5.400 1-1 1.800-2.600 2.600-4.600 2.300-2.200-.4-3.300-2-3.600-3.600-2 .2-4-.8-4.600-2.800-.6-2 .4-3.800 1.800-4.700-1-1.600-1-3.800.5-5.200 1.500-1.400 3.500-1.400 5-.6.600-1.600 1.500-2.600 3-2.600z" fill="#9d9d9d"/><path d="M9 11.500l2 1.500-2 1.500M15 12.500h2.500" stroke="#fff" stroke-width="1.200" fill="none"/></svg><svg style="left:125px;top:735px" width="30" height="30" viewBox="0 0 28 28"><path d="M14 1l9.200 3.800 3.800 9.200-3.800 9.200-9.200 3.800-9.200-3.800-3.800-9.200 3.800-9.200z" fill="#9d9d9d"/><path d="M14 1v26M1 14h26M4.800 4.800l18.400 18.400M23.200 4.800l-18.400 18.400" stroke="#fff" stroke-width="0.700" opacity=".8"/></svg><svg style="left:220px;top:736px" width="29" height="27" viewBox="0 0 28 26"><path d="M12 22c-5-3.500-10.500-8-10.500-13.500 0-3.500 2.700-6 5.800-6 2 0 3.700 1 4.700 2.600 1-1.600 2.700-2.600 4.700-2.600 3.100 0 5.800 2.500 5.800 6 0 1-.2 2-.5 2.900" fill="#9d9d9d"/><path d="M19.500 25c-3-2-6.500-4.800-6.500-8.200 0-2.200 1.700-3.700 3.600-3.700 1.200 0 2.300.6 2.900 1.600.6-1 1.700-1.600 2.900-1.600 1.900 0 3.600 1.500 3.600 3.700 0 3.400-3.500 6.200-6.500 8.200z" fill="#9d9d9d" stroke="#fff" stroke-width="1.200"/></svg><svg style="left:315px;top:736px" width="26" height="26" viewBox="0 0 26 26"><circle cx="13" cy="13" r="12.500" fill="#d81e06"/><g stroke="#fff" stroke-width="1.300" fill="none"><path d="M13 .5l4.500 9M25.500 13l-9 4.500M13 25.500l-4.500-9M.5 13l9-4.500M21.800 4.200l-3 9.500M21.800 21.800l-9.500-3M4.200 21.800l3-9.500M4.200 4.200l9.500 3"/></g></svg><div class="abs" style="left:131px;top:798px;width:112px;height:5px;border-radius:2.5px;background:#111"></div></div><div id="act" class="abs"></div><svg style="left:509px;top:105px" width="17" height="18" viewBox="0 0 17 18" fill="none" stroke="#fff" stroke-width="1.200"><path d="M5.500 4.500v-2a1 1 0 0 1 1-1h5l3.500 3.500v7.500a1 1 0 0 1-1 1h-3.500"/><path d="M11.200 1.700v3.500h3.500"/><rect x="1.600" y="4.600" width="8.800" height="11.800" rx="1.500"/></svg><svg style="left:541px;top:105px" width="18" height="18" viewBox="0 0 18 18" fill="none" stroke="#9a9a9a" stroke-width="1.300"><circle cx="10.500" cy="7" r="5"/><path d="M7 10.500l-5.500 6"/></svg><svg style="left:574px;top:105px" width="16" height="18" viewBox="0 0 16 18" fill="none" stroke="#9a9a9a" stroke-width="1.200"><circle cx="4.500" cy="3.500" r="2"/><circle cx="4.500" cy="14.500" r="2"/><circle cx="12" cy="6.500" r="2"/><path d="M4.500 5.500v7M12 8.500c0 3-7.500 2-7.500 4.500"/></svg><svg style="left:605px;top:105px" width="18" height="18" viewBox="0 0 18 18" fill="none" stroke="#9a9a9a" stroke-width="1.200"><rect x="1.500" y="6.500" width="5" height="5"/><rect x="1.500" y="11.500" width="5" height="5"/><rect x="6.500" y="11.500" width="5" height="5"/><rect x="10.500" y="1.500" width="5" height="5"/></svg><svg style="left:638px;top:106px" width="16" height="16" viewBox="0 0 16 16" fill="none" stroke="#9a9a9a" stroke-width="1.200"><rect x="1.500" y="1.500" width="13" height="13" rx="1.500"/><path d="M4.500 1.500v4.500h7v-4.500M6 14.500v-4.500h8.500"/></svg><svg style="left:668px;top:106px" width="20" height="16" viewBox="0 0 20 16"><path d="M1 8h13.500c.5-1.500 1.800-2.300 3-2 .2.800 0 1.500-.5 2 .8.200 1.500.5 2 1-1 .8-2.200 1-3.200.8-1.200 3-3.800 4.700-7.800 4.700-4 0-6.500-2.200-7-6.500z" fill="#9a9a9a"/><path d="M3.500 5.500h8v2h-8zM6 3h3v2h-3z" fill="#9a9a9a"/></svg><div id="exp" class="abs"><div class="t" style="left:19px;top:12px;font-size:11px;color:#ccc;line-height:12px">资源管理器</div><svg style="left:167px;top:16px" width="14" height="4"><circle cx="1.500" cy="1.500" r="1" fill="#ccc"/><circle cx="6.500" cy="1.500" r="1" fill="#ccc"/><circle cx="11.500" cy="1.500" r="1" fill="#ccc"/></svg><div class="abs" style="left:0;top:35px;width:200px;height:22px;background:#373737"></div><div class="abs" style="left:0;top:57px;width:200px;height:22px;background:#373737"></div><svg style="left:8px;top:42px" width="6" height="8"><path d="M0.500 0.500l4 3.500-4 3.500z" fill="#c5c5c5"/></svg><div class="t" style="left:19px;top:40px;font-size:11px;font-weight:bold;color:#ccc;line-height:12px">打开的编辑器</div><svg style="left:6px;top:65px" width="8" height="6"><path d="M0.500 0.500h7l-3.500 4z" fill="#c5c5c5"/></svg><div class="t" style="left:19px;top:62px;font-size:11px;font-weight:bold;color:#ccc;line-height:12px">WXAPP</div><svg style="left:20.5px;top:86px" width="6" height="8"><path d="M0.500 0.500l4 3.500-4 3.500z" fill="#c5c5c5"/></svg><svg style="left:34px;top:83px" width="16" height="14" viewBox="0 0 16 14"><path d="M1 2.500a1 1 0 0 1 1-1h4l1.500 1.500h6.500a1 1 0 0 1 1 1v8a1 1 0 0 1-1 1h-12a1 1 0 0 1-1-1z" fill="#90a4ae"/></svg><div class="t row" style="left:56px;top:80px;width:auto">@babel</div><svg style="left:20.5px;top:108px" width="6" height="8"><path d="M0.500 0.500l4 3.500-4 3.500z" fill="#c5c5c5"/></svg><svg style="left:34px;top:105px" width="16" height="14" viewBox="0 0 16 14"><path d="M1 2.500a1 1 0 0 1 1-1h4l1.500 1.500h6.500a1 1 0 0 1 1 1v8a1 1 0 0 1-1 1h-12a1 1 0 0 1-1-1z" fill="#e57373"/><rect x="8" y="6.500" width="7" height="6.500" rx="1" fill="#ffcdd2"/><path d="M10 6.500v-1a1.500 1.500 0 0 1 3 0v1" stroke="#ffcdd2" stroke-width="0.900" fill="none"/></svg><div class="t row" style="left:56px;top:102px;width:auto">dist</div><svg style="left:20.5px;top:130px" width="6" height="8"><path d="M0.500 0.500l4 3.500-4 3.500z" fill="#c5c5c5"/></svg><svg style="left:34px;top:127px" width="16" height="14" viewBox="0 0 16 14"><path d="M1 2.500a1 1 0 0 1 1-1h4l1.500 1.500h6.500a1 1 0 0 1 1 1v8a1 1 0 0 1-1 1h-12a1 1 0 0 1-1-1z" fill="#26a69a"/><rect x="7.500" y="5.500" width="7.500" height="7.500" rx="1" fill="#b2dfdb"/><circle cx="12.800" cy="7.800" r="0.900" fill="#26a69a"/><path d="M8.500 12l2-2.500 1.500 1.500 1-1 1.500 2z" fill="#26a69a"/></svg><div class="t row" style="left:56px;top:124px;width:auto">images</div><svg style="left:19px;top:153.5px" width="8" height="6"><path d="M0.500 0.500h7l-3.500 4z" fill="#c5c5c5"/></svg><svg style="left:34px;top:149px" width="16" height="14" viewBox="0 0 16 14"><path d="M1 2.500a1 1 0 0 1 1-1h3.500l1.500 1.500h6a1 1 0 0 1 1 1v1h-9.500l-2.500 6.500h-1z" fill="#ff7043"/><path d="M4.800 5.500h11l-2.500 7h-11z" fill="#ff7043"/><rect x="7" y="6" width="8" height="7" rx="1" fill="#ffccbc"/><path d="M10 8l-1.200 1.500 1.200 1.500M12 8l1.200 1.500-1.200 1.500" stroke="#ff7043" stroke-width="0.800" fill="none"/></svg><div class="t row" style="left:56px;top:146px;width:auto">pages</div><svg style="left:27px;top:175.5px" width="8" height="6"><path d="M0.500 0.500h7l-3.500 4z" fill="#c5c5c5"/></svg><svg style="left:42px;top:171px" width="16" height="14" viewBox="0 0 16 14"><path d="M1 2.500a1 1 0 0 1 1-1h3.500l1.500 1.500h6a1 1 0 0 1 1 1v1h-9.500l-2.500 6.500h-1z" fill="#90a4ae"/><path d="M4.800 5.500h11l-2.500 7h-11z" fill="#90a4ae"/></svg><div class="t row" style="left:64px;top:168px;width:auto">dynamic</div><svg style="left:51px;top:193px" width="14" height="14" viewBox="0 0 14 14"><rect x="1" y="1" width="12.200" height="12.200" fill="#f5c518"/><path d="M7 7.800v3a.9.9 0 0 1-1.800.2M11.600 8.200c-.7-.7-2.200-.5-2.200.4 0 1.100 2.200.7 2.200 1.900 0 .9-1.600 1.200-2.400.3" stroke="#3a3000" stroke-width="0.850" fill="none"/></svg><div class="t row" style="left:72px;top:190px;width:auto;color:#ccc">dynamic.js</div><svg style="left:49px;top:215px" width="18" height="14" viewBox="0 0 18 14" fill="none" stroke="#f0b429" stroke-width="1.300"><path d="M4.500 1.500c-1.800 0-2 .8-2 2v2c0 1-.5 1.500-1.500 1.500 1 0 1.500.5 1.500 1.500v2c0 1.200.2 2 2 2M13.500 1.500c1.800 0 2 .8 2 2v2c0 1 .5 1.500 1.500 1.500-1 0-1.500.5-1.500 1.500v2c0 1.200-.2 2-2 2"/><path d="M6 9.500h.1M9 9.500h.1M12 9.500h.1" stroke-linecap="round"/></svg><div class="t row" style="left:72px;top:212px;width:auto;color:#ccc">dynamic.json</div><svg style="left:52px;top:236.5px" width="12" height="15" viewBox="0 0 12 15"><path d="M1.500 0.500h6l4 4v9a1 1 0 0 1-1 1h-9a1 1 0 0 1-1-1v-12a1 1 0 0 1 1-1z" fill="#7cb342"/><path d="M7.500 0.500v4h4z" fill="#aed581"/><path d="M4.800 7.500l-1.800 2 1.800 2M7.200 7.500l1.800 2-1.800 2" stroke="#1b3a00" stroke-width="1.100" fill="none"/></svg><div class="t row" style="left:72px;top:234px;width:auto;color:#ccc">dynamic.wxml</div><svg style="left:51px;top:259px" width="14" height="14" viewBox="0 0 14 14"><path d="M2 0.500h11.500l-1.800 10.500-4.500 2.500-4.200-2.500-.4-2.500h2.400l.2 1 2 1.200 2.300-1.200.4-2.500h-7.900l.4-2.500h7.800l.2-1.500h-8.800z" fill="#42a5f5"/></svg><div class="t row" style="left:72px;top:256px;width:auto;color:#ccc">dynamic.wxss</div><svg style="left:27px;top:285.5px" width="8" height="6"><path d="M0.500 0.500h7l-3.500 4z" fill="#c5c5c5"/></svg><svg style="left:42px;top:281px" width="16" height="14" viewBox="0 0 16 14"><path d="M1 2.500a1 1 0 0 1 1-1h3.500l1.500 1.500h6a1 1 0 0 1 1 1v1h-9.500l-2.500 6.500h-1z" fill="#90a4ae"/><path d="M4.800 5.500h11l-2.500 7h-11z" fill="#90a4ae"/></svg><div class="t row" style="left:64px;top:278px;width:auto">dynamicdetail</div><svg style="left:51px;top:303px" width="14" height="14" viewBox="0 0 14 14"><rect x="1" y="1" width="12.200" height="12.200" fill="#f5c518"/><path d="M7 7.800v3a.9.9 0 0 1-1.800.2M11.600 8.200c-.7-.7-2.200-.5-2.200.4 0 1.100 2.200.7 2.200 1.900 0 .9-1.600 1.200-2.400.3" stroke="#3a3000" stroke-width="0.850" fill="none"/></svg><div class="t row" style="left:72px;top:300px;width:auto;color:#ccc">dynamicdetail.js</div><svg style="left:49px;top:325px" width="18" height="14" viewBox="0 0 18 14" fill="none" stroke="#f0b429" stroke-width="1.300"><path d="M4.500 1.500c-1.800 0-2 .8-2 2v2c0 1-.5 1.500-1.500 1.500 1 0 1.500.5 1.500 1.500v2c0 1.200.2 2 2 2M13.500 1.500c1.800 0 2 .8 2 2v2c0 1 .5 1.500 1.500 1.500-1 0-1.500.5-1.500 1.500v2c0 1.200-.2 2-2 2"/><path d="M6 9.500h.1M9 9.500h.1M12 9.500h.1" stroke-linecap="round"/></svg><div class="t row" style="left:72px;top:322px;width:auto;color:#ccc">dynamicdetail.json</div><svg style="left:52px;top:346.5px" width="12" height="15" viewBox="0 0 12 15"><path d="M1.500 0.500h6l4 4v9a1 1 0 0 1-1 1h-9a1 1 0 0 1-1-1v-12a1 1 0 0 1 1-1z" fill="#7cb342"/><path d="M7.500 0.500v4h4z" fill="#aed581"/><path d="M4.800 7.500l-1.800 2 1.800 2M7.200 7.500l1.800 2-1.800 2" stroke="#1b3a00" stroke-width="1.100" fill="none"/></svg><div class="t row" style="left:72px;top:344px;width:auto;color:#ccc">dynamicdetail.wxml</div><svg style="left:51px;top:369px" width="14" height="14" viewBox="0 0 14 14"><path d="M2 0.500h11.500l-1.800 10.500-4.500 2.500-4.200-2.500-.4-2.500h2.400l.2 1 2 1.200 2.300-1.200.4-2.500h-7.900l.4-2.500h7.800l.2-1.500h-8.800z" fill="#42a5f5"/></svg><div class="t row" style="left:72px;top:366px;width:auto;color:#ccc">dynamicdetail.wxss</div><svg style="left:27px;top:395.5px" width="8" height="6"><path d="M0.500 0.500h7l-3.500 4z" fill="#c5c5c5"/></svg><svg style="left:42px;top:391px" width="16" height="14" viewBox="0 0 16 14"><path d="M1 2.500a1 1 0 0 1 1-1h3.500l1.500 1.500h6a1 1 0 0 1 1 1v1h-9.500l-2.500 6.500h-1z" fill="#90a4ae"/><path d="M4.800 5.500h11l-2.500 7h-11z" fill="#90a4ae"/></svg><div class="t row" style="left:64px;top:388px;width:auto">head</div><svg style="left:51px;top:413px" width="14" height="14" viewBox="0 0 14 14"><rect x="1" y="1" width="12.200" height="12.200" fill="#f5c518"/><path d="M7 7.800v3a.9.9 0 0 1-1.800.2M11.600 8.200c-.7-.7-2.200-.5-2.200.4 0 1.100 2.200.7 2.200 1.900 0 .9-1.600 1.200-2.400.3" stroke="#3a3000" stroke-width="0.850" fill="none"/></svg><div class="t row" style="left:72px;top:410px;width:auto;color:#ccc">head.js</div><svg style="left:49px;top:435px" width="18" height="14" viewBox="0 0 18 14" fill="none" stroke="#f0b429" stroke-width="1.300"><path d="M4.500 1.500c-1.800 0-2 .8-2 2v2c0 1-.5 1.500-1.500 1.500 1 0 1.500.5 1.500 1.500v2c0 1.200.2 2 2 2M13.500 1.500c1.800 0 2 .8 2 2v2c0 1 .5 1.500 1.500 1.500-1 0-1.500.5-1.500 1.500v2c0 1.200-.2 2-2 2"/><path d="M6 9.500h.1M9 9.500h.1M12 9.500h.1" stroke-linecap="round"/></svg><div class="t row" style="left:72px;top:432px;width:auto;color:#ccc">head.json</div><svg style="left:52px;top:456.5px" width="12" height="15" viewBox="0 0 12 15"><path d="M1.500 0.500h6l4 4v9a1 1 0 0 1-1 1h-9a1 1 0 0 1-1-1v-12a1 1 0 0 1 1-1z" fill="#7cb342"/><path d="M7.500 0.500v4h4z" fill="#aed581"/><path d="M4.800 7.500l-1.800 2 1.800 2M7.200 7.500l1.800 2-1.800 2" stroke="#1b3a00" stroke-width="1.100" fill="none"/></svg><div class="t row" style="left:72px;top:454px;width:auto;color:#ccc">head.wxml</div><svg style="left:51px;top:479px" width="14" height="14" viewBox="0 0 14 14"><path d="M2 0.500h11.500l-1.800 10.500-4.500 2.500-4.200-2.500-.4-2.500h2.400l.2 1 2 1.200 2.300-1.200.4-2.500h-7.900l.4-2.500h7.800l.2-1.500h-8.800z" fill="#42a5f5"/></svg><div class="t row" style="left:72px;top:476px;width:auto;color:#ccc">head.wxss</div><svg style="left:28.5px;top:504px" width="6" height="8"><path d="M0.500 0.500l4 3.500-4 3.500z" fill="#c5c5c5"/></svg><svg style="left:42px;top:501px" width="16" height="14" viewBox="0 0 16 14"><path d="M1 2.500a1 1 0 0 1 1-1h4l1.500 1.500h6.500a1 1 0 0 1 1 1v8a1 1 0 0 1-1 1h-12a1 1 0 0 1-1-1z" fill="#90a4ae"/></svg><div class="t row" style="left:64px;top:498px;width:auto">headdetail</div><svg style="left:27px;top:527.5px" width="8" height="6"><path d="M0.500 0.500h7l-3.500 4z" fill="#c5c5c5"/></svg><svg style="left:42px;top:523px" width="16" height="14" viewBox="0 0 16 14"><path d="M1 2.500a1 1 0 0 1 1-1h3.500l1.500 1.500h6a1 1 0 0 1 1 1v1h-9.500l-2.500 6.500h-1z" fill="#90a4ae"/><path d="M4.800 5.500h11l-2.500 7h-11z" fill="#90a4ae"/></svg><div class="t row" style="left:64px;top:520px;width:auto">home</div><svg style="left:51px;top:545px" width="14" height="14" viewBox="0 0 14 14"><rect x="1" y="1" width="12.200" height="12.200" fill="#f5c518"/><path d="M7 7.800v3a.9.9 0 0 1-1.800.2M11.600 8.200c-.7-.7-2.200-.5-2.200.4 0 1.100 2.200.7 2.200 1.900 0 .9-1.600 1.200-2.400.3" stroke="#3a3000" stroke-width="0.850" fill="none"/></svg><div class="t row" style="left:72px;top:542px;width:auto;color:#ccc">home.js</div><svg style="left:49px;top:567px" width="18" height="14" viewBox="0 0 18 14" fill="none" stroke="#f0b429" stroke-width="1.300"><path d="M4.500 1.500c-1.800 0-2 .8-2 2v2c0 1-.5 1.500-1.500 1.500 1 0 1.500.5 1.500 1.500v2c0 1.200.2 2 2 2M13.500 1.500c1.800 0 2 .8 2 2v2c0 1 .5 1.500 1.500 1.500-1 0-1.500.5-1.500 1.500v2c0 1.200-.2 2-2 2"/><path d="M6 9.500h.1M9 9.500h.1M12 9.500h.1" stroke-linecap="round"/></svg><div class="t row" style="left:72px;top:564px;width:auto;color:#ccc">home.json</div><svg style="left:52px;top:588.5px" width="12" height="15" viewBox="0 0 12 15"><path d="M1.500 0.500h6l4 4v9a1 1 0 0 1-1 1h-9a1 1 0 0 1-1-1v-12a1 1 0 0 1 1-1z" fill="#7cb342"/><path d="M7.500 0.500v4h4z" fill="#aed581"/><path d="M4.800 7.500l-1.800 2 1.800 2M7.200 7.500l1.800 2-1.800 2" stroke="#1b3a00" stroke-width="1.100" fill="none"/></svg><div class="t row" style="left:72px;top:586px;width:auto;color:#ccc">home.wxml</div><svg style="left:51px;top:611px" width="14" height="14" viewBox="0 0 14 14"><path d="M2 0.500h11.500l-1.800 10.500-4.500 2.500-4.200-2.500-.4-2.500h2.400l.2 1 2 1.200 2.300-1.200.4-2.500h-7.900l.4-2.500h7.800l.2-1.500h-8.800z" fill="#42a5f5"/></svg><div class="t row" style="left:72px;top:608px;width:auto;color:#ccc">home.wxss</div><svg style="left:27px;top:637.5px" width="8" height="6"><path d="M0.500 0.500h7l-3.500 4z" fill="#c5c5c5"/></svg><svg style="left:42px;top:633px" width="16" height="14" viewBox="0 0 16 14"><path d="M1 2.500a1 1 0 0 1 1-1h3.500l1.500 1.500h6a1 1 0 0 1 1 1v1h-9.500l-2.500 6.500h-1z" fill="#90a4ae"/><path d="M4.800 5.500h11l-2.500 7h-11z" fill="#90a4ae"/></svg><div class="t row" style="left:64px;top:630px;width:auto">paperdetail</div><svg style="left:51px;top:655px" width="14" height="14" viewBox="0 0 14 14"><rect x="1" y="1" width="12.200" height="12.200" fill="#f5c518"/><path d="M7 7.800v3a.9.9 0 0 1-1.800.2M11.600 8.200c-.7-.7-2.200-.5-2.200.4 0 1.100 2.200.7 2.200 1.900 0 .9-1.600 1.200-2.400.3" stroke="#3a3000" stroke-width="0.850" fill="none"/></svg><div class="t row" style="left:72px;top:652px;width:auto;color:#ccc">paperdetail.js</div><svg style="left:49px;top:677px" width="18" height="14" viewBox="0 0 18 14" fill="none" stroke="#f0b429" stroke-width="1.300"><path d="M4.500 1.500c-1.800 0-2 .8-2 2v2c0 1-.5 1.500-1.500 1.500 1 0 1.500.5 1.500 1.500v2c0 1.200.2 2 2 2M13.500 1.500c1.800 0 2 .8 2 2v2c0 1 .5 1.500 1.500 1.500-1 0-1.500.5-1.500 1.500v2c0 1.200-.2 2-2 2"/><path d="M6 9.500h.1M9 9.500h.1M12 9.500h.1" stroke-linecap="round"/></svg><div class="t row" style="left:72px;top:674px;width:auto;color:#ccc">paperdetail.json</div><div class="abs" style="left:0;top:695px;width:200px;height:22px;background:#404040"></div><svg style="left:52px;top:698.5px" width="12" height="15" viewBox="0 0 12 15"><path d="M1.500 0.500h6l4 4v9a1 1 0 0 1-1 1h-9a1 1 0 0 1-1-1v-12a1 1 0 0 1 1-1z" fill="#7cb342"/><path d="M7.500 0.500v4h4z" fill="#aed581"/><path d="M4.800 7.500l-1.800 2 1.800 2M7.200 7.500l1.800 2-1.800 2" stroke="#1b3a00" stroke-width="1.100" fill="none"/></svg><div class="t row" style="left:72px;top:696px;width:auto;color:#fff">paperdetail.wxml</div><svg style="left:51px;top:721px" width="14" height="14" viewBox="0 0 14 14"><path d="M2 0.500h11.500l-1.800 10.500-4.500 2.500-4.200-2.500-.4-2.500h2.400l.2 1 2 1.200 2.300-1.200.4-2.500h-7.900l.4-2.500h7.800l.2-1.500h-8.800z" fill="#42a5f5"/></svg><div class="t row" style="left:72px;top:718px;width:auto;color:#ccc">paperdetail.wxss</div><svg style="left:27px;top:747.5px" width="8" height="6"><path d="M0.500 0.500h7l-3.500 4z" fill="#c5c5c5"/></svg><svg style="left:42px;top:743px" width="16" height="14" viewBox="0 0 16 14"><path d="M1 2.500a1 1 0 0 1 1-1h3.500l1.500 1.500h6a1 1 0 0 1 1 1v1h-9.500l-2.500 6.500h-1z" fill="#90a4ae"/><path d="M4.800 5.500h11l-2.500 7h-11z" fill="#90a4ae"/></svg><div class="t row" style="left:64px;top:740px;width:auto">searchimg</div><svg style="left:51px;top:765px" width="14" height="14" viewBox="0 0 14 14"><rect x="1" y="1" width="12.200" height="12.200" fill="#f5c518"/><path d="M7 7.800v3a.9.9 0 0 1-1.800.2M11.600 8.200c-.7-.7-2.200-.5-2.200.4 0 1.100 2.200.7 2.200 1.900 0 .9-1.600 1.200-2.400.3" stroke="#3a3000" stroke-width="0.850" fill="none"/></svg><div class="t row" style="left:72px;top:762px;width:auto;color:#ccc">searchimg.js</div><svg style="left:49px;top:787px" width="18" height="14" viewBox="0 0 18 14" fill="none" stroke="#f0b429" stroke-width="1.300"><path d="M4.500 1.500c-1.800 0-2 .8-2 2v2c0 1-.5 1.500-1.500 1.500 1 0 1.500.5 1.500 1.500v2c0 1.200.2 2 2 2M13.500 1.500c1.800 0 2 .8 2 2v2c0 1 .5 1.500 1.500 1.500-1 0-1.500.5-1.500 1.500v2c0 1.200-.2 2-2 2"/><path d="M6 9.500h.1M9 9.500h.1M12 9.500h.1" stroke-linecap="round"/></svg><div class="t row" style="left:72px;top:784px;width:auto;color:#ccc">searchimg.json</div><svg style="left:52px;top:808.5px" width="12" height="15" viewBox="0 0 12 15"><path d="M1.500 0.500h6l4 4v9a1 1 0 0 1-1 1h-9a1 1 0 0 1-1-1v-12a1 1 0 0 1 1-1z" fill="#7cb342"/><path d="M7.500 0.500v4h4z" fill="#aed581"/><path d="M4.800 7.500l-1.800 2 1.800 2M7.200 7.500l1.800 2-1.800 2" stroke="#1b3a00" stroke-width="1.100" fill="none"/></svg><div class="t row" style="left:72px;top:806px;width:auto;color:#ccc">searchimg.wxml</div><svg style="left:51px;top:831px" width="14" height="14" viewBox="0 0 14 14"><path d="M2 0.500h11.500l-1.800 10.500-4.500 2.500-4.200-2.500-.4-2.500h2.400l.2 1 2 1.200 2.300-1.200.4-2.500h-7.900l.4-2.500h7.800l.2-1.500h-8.800z" fill="#42a5f5"/></svg><div class="t row" style="left:72px;top:828px;width:auto;color:#ccc">searchimg.wxss</div><svg style="left:27px;top:857.5px" width="8" height="6"><path d="M0.500 0.500h7l-3.500 4z" fill="#c5c5c5"/></svg><svg style="left:42px;top:853px" width="16" height="14" viewBox="0 0 16 14"><path d="M1 2.500a1 1 0 0 1 1-1h3.500l1.500 1.500h6a1 1 0 0 1 1 1v1h-9.500l-2.500 6.500h-1z" fill="#90a4ae"/><path d="M4.800 5.500h11l-2.500 7h-11z" fill="#90a4ae"/></svg><div class="t row" style="left:64px;top:850px;width:auto">searchvideo</div><div class="abs" style="left:27.500px;top:651px;width:1px;height:88px;background:#585858"></div></div><div class="abs" style="left:701px;top:129px;width:1px;height:862px;background:#2a2a2a"></div><div id="edtabs" class="abs"><div class="abs tab" style="left:0px;width:120px"></div><svg style="left:9px;top:8px" width="18" height="14" viewBox="0 0 18 14" fill="none" stroke="#f0b429" stroke-width="1.300"><path d="M4.500 1.500c-1.800 0-2 .8-2 2v2c0 1-.5 1.500-1.500 1.500 1 0 1.500.5 1.500 1.500v2c0 1.200.2 2 2 2M13.500 1.500c1.800 0 2 .8 2 2v2c0 1 .5 1.500 1.500 1.500-1 0-1.500.5-1.500 1.500v2c0 1.200-.2 2-2 2"/><path d="M6 9.500h.1M9 9.500h.1M12 9.500h.1" stroke-linecap="round"/></svg><div class="t" style="left:32px;top:1px;line-height:30px;font-size:12.6px;color:#9d9d9d;font-style:normal">head.json</div><div class="abs tab" style="left:120px;width:136px"></div><svg style="left:129px;top:8px" width="18" height="14" viewBox="0 0 18 14" fill="none" stroke="#f0b429" stroke-width="1.300"><path d="M4.500 1.500c-1.800 0-2 .8-2 2v2c0 1-.5 1.500-1.500 1.500 1 0 1.500.5 1.500 1.500v2c0 1.200.2 2 2 2M13.500 1.500c1.800 0 2 .8 2 2v2c0 1 .5 1.500 1.500 1.500-1 0-1.500.5-1.500 1.500v2c0 1.200-.2 2-2 2"/><path d="M6 9.500h.1M9 9.500h.1M12 9.500h.1" stroke-linecap="round"/></svg><div class="t" style="left:152px;top:1px;line-height:30px;font-size:12.6px;color:#9d9d9d;font-style:normal">dynamic.json</div><div class="abs tab" style="left:256px;width:120px"></div><svg style="left:265px;top:8px" width="18" height="14" viewBox="0 0 18 14" fill="none" stroke="#f0b429" stroke-width="1.300"><path d="M4.500 1.500c-1.800 0-2 .8-2 2v2c0 1-.5 1.500-1.500 1.500 1 0 1.500.5 1.500 1.500v2c0 1.200.2 2 2 2M13.500 1.500c1.800 0 2 .8 2 2v2c0 1 .5 1.500 1.500 1.500-1 0-1.500.5-1.500 1.500v2c0 1.200-.2 2-2 2"/><path d="M6 9.500h.1M9 9.500h.1M12 9.500h.1" stroke-linecap="round"/></svg><div class="t" style="left:288px;top:1px;line-height:30px;font-size:12.6px;color:#9d9d9d;font-style:normal">home.json</div><div class="abs tab a" style="left:376px;width:157px"></div><svg style="left:388px;top:7.5px" width="12" height="15" viewBox="0 0 12 15"><path d="M1.500 0.500h6l4 4v9a1 1 0 0 1-1 1h-9a1 1 0 0 1-1-1v-12a1 1 0 0 1 1-1z" fill="#7cb342"/><path d="M7.500 0.500v4h4z" fill="#aed581"/><path d="M4.800 7.500l-1.800 2 1.800 2M7.200 7.500l1.800 2-1.800 2" stroke="#1b3a00" stroke-width="1.100" fill="none"/></svg><div class="t" style="left:408px;top:1px;line-height:30px;font-size:12.6px;color:#fff;font-style:italic">paperdetail.wxml</div><div class="abs tab" style="left:533px;width:120px"></div><svg style="left:544px;top:8px" width="14" height="14" viewBox="0 0 14 14"><path d="M2 0.500h11.500l-1.800 10.500-4.500 2.500-4.200-2.500-.4-2.500h2.400l.2 1 2 1.200 2.300-1.200.4-2.500h-7.900l.4-2.500h7.800l.2-1.500h-8.800z" fill="#42a5f5"/></svg><div class="t" style="left:565px;top:1px;line-height:30px;font-size:12.6px;color:#9d9d9d;font-style:normal">set.wxss</div><div class="abs tab" style="left:653px;width:209px"></div><svg style="left:662px;top:8px" width="18" height="14" viewBox="0 0 18 14" fill="none" stroke="#f0b429" stroke-width="1.300"><path d="M4.500 1.500c-1.800 0-2 .8-2 2v2c0 1-.5 1.500-1.500 1.500 1 0 1.500.5 1.500 1.500v2c0 1.200.2 2 2 2M13.500 1.500c1.800 0 2 .8 2 2v2c0 1 .5 1.500 1.500 1.500-1 0-1.500.5-1.500 1.500v2c0 1.200-.2 2-2 2"/><path d="M6 9.500h.1M9 9.500h.1M12 9.500h.1" stroke-linecap="round"/></svg><div class="t" style="left:685px;top:1px;line-height:30px;font-size:12.6px;color:#9d9d9d;font-style:normal">project.private.config.json</div><div class="abs tab" style="left:862px;width:120px"></div><svg style="left:873px;top:8px" width="14" height="14" viewBox="0 0 14 14"><rect x="1" y="1" width="12.200" height="12.200" fill="#f5c518"/><path d="M7 7.800v3a.9.9 0 0 1-1.800.2M11.600 8.200c-.7-.7-2.200-.5-2.200.4 0 1.100 2.200.7 2.200 1.900 0 .9-1.600 1.200-2.400.3" stroke="#3a3000" stroke-width="0.850" fill="none"/></svg><div class="t" style="left:894px;top:1px;line-height:30px;font-size:12.6px;color:#9d9d9d;font-style:normal">app.js</div><div class="abs tab" style="left:982px;width:173px"></div><svg style="left:991px;top:8px" width="18" height="14" viewBox="0 0 18 14" fill="none" stroke="#f0b429" stroke-width="1.300"><path d="M4.500 1.500c-1.800 0-2 .8-2 2v2c0 1-.5 1.500-1.500 1.500 1 0 1.500.5 1.500 1.500v2c0 1.200.2 2 2 2M13.500 1.500c1.800 0 2 .8 2 2v2c0 1 .5 1.500 1.500 1.500-1 0-1.500.5-1.500 1.500v2c0 1.200-.2 2-2 2"/><path d="M6 9.500h.1M9 9.500h.1M12 9.500h.1" stroke-linecap="round"/></svg><div class="t" style="left:1014px;top:1px;line-height:30px;font-size:12.6px;color:#9d9d9d;font-style:normal">setdetail.json</div><svg style="left:511px;top:10px" width="10" height="10" fill="none" stroke="#fff" stroke-width="1.200"><path d="M0.500 0.500l9 9M9.500 0.500l-9 9"/></svg><div class="abs" style="left:1094px;top:0;width:61px;height:30px;background:#393939"></div><svg style="left:1100px;top:9px" width="13" height="12" fill="none" stroke="#d0d0d0" stroke-width="1.100"><rect x="0.500" y="0.500" width="11.500" height="10.500"/><path d="M6.200 0.500v10.500"/></svg><svg style="left:1131px;top:14px" width="14" height="4"><circle cx="1.500" cy="1.500" r="1.100" fill="#d0d0d0"/><circle cx="6.500" cy="1.500" r="1.100" fill="#d0d0d0"/><circle cx="11.500" cy="1.500" r="1.100" fill="#d0d0d0"/></svg></div><div id="ed" class="abs"><svg style="left:8px;top:5px" width="14" height="12" fill="none" stroke="#c5c5c5" stroke-width="1"><path d="M0 1.500h1.500M3.500 1.500h10M0 4.500h1.500M3.500 4.500h10M0 7.500h1.500M3.500 7.500h10M0 10.500h1.500M3.500 10.500h10"/></svg><svg style="left:40px;top:4px" width="11" height="14" fill="none" stroke="#c5c5c5" stroke-width="1.200"><path d="M1 0.600h9v12l-4.500-3.500-4.500 3.500z"/></svg><svg style="left:69px;top:6px" width="13" height="11" fill="none" stroke="#c5c5c5" stroke-width="1.200"><path d="M13 5.500h-12M5.500 1l-4.500 4.500 4.500 4.500"/></svg><svg style="left:97px;top:6px" width="13" height="11" fill="none" stroke="#555" stroke-width="1.200"><path d="M0 5.500h12M7.500 1l4.500 4.500-4.500 4.500"/></svg><div class="t" style="left:126px;top:1px;line-height:22px;font-size:12.6px;color:#8e8e8e">pages</div><svg style="left:165px;top:7px" width="6" height="9" fill="none" stroke="#8e8e8e" stroke-width="1.100"><path d="M1 0.500l4 4-4 4"/></svg><div class="t" style="left:176px;top:1px;line-height:22px;font-size:12.6px;color:#8e8e8e">paperdetail</div><svg style="left:246px;top:7px" width="6" height="9" fill="none" stroke="#8e8e8e" stroke-width="1.100"><path d="M1 0.500l4 4-4 4"/></svg><svg style="left:260px;top:3.5px" width="12" height="15" viewBox="0 0 12 15"><path d="M1.500 0.500h6l4 4v9a1 1 0 0 1-1 1h-9a1 1 0 0 1-1-1v-12a1 1 0 0 1 1-1z" fill="#7cb342"/><path d="M7.500 0.500v4h4z" fill="#aed581"/><path d="M4.800 7.500l-1.800 2 1.800 2M7.200 7.500l1.800 2-1.800 2" stroke="#1b3a00" stroke-width="1.100" fill="none"/></svg><div class="t" style="left:279px;top:1px;line-height:22px;font-size:12.6px;color:#bdbdbd">paperdetail.wxml</div><svg style="left:382px;top:7px" width="6" height="9" fill="none" stroke="#8e8e8e" stroke-width="1.100"><path d="M1 0.500l4 4-4 4"/></svg><svg style="left:394px;top:4px" width="15" height="14" fill="none" stroke="#5fa8e8" stroke-width="1"><path d="M7.500 1l6 2.500v6.500l-6 3-6-3v-6.500zM1.500 3.500l6 2.500 6-2.500M7.500 6v7"/></svg><div class="t" style="left:414px;top:1px;line-height:22px;font-size:12.6px;color:#8e8e8e">view.container</div><div class="abs ln" style="top:23px">1</div><svg style="left:65px;top:27px" width="11" height="7" fill="none" stroke="#c5c5c5" stroke-width="1.200"><path d="M0.500 0.500l5 5 5-5"/></svg><div class="abs cl" style="top:23px"><span class="tg">&lt;view</span> class="<span class="st">container</span>"<span class="tg">&gt;</span></div><div class="abs ln" style="top:55px">2</div><div class="abs ig" style="left:85.0px;top:54px;height:32px"></div><div class="abs ig" style="left:102.6px;top:54px;height:32px"></div><div class="abs cl" style="top:55px">    <span class="tg">&lt;image</span> bindload="<span class="st">bindload</span>" class="<span class="st">photo</span>" mode="<span class="st">aspectFill</span>" src="<span class="y u">{</span><span class="p u">{</span><span class="u">imgSrc</span><span class="p u">}</span><span class="y u">}</span>"<span class="tg">&gt;&lt;/image&gt;</span></div><div class="abs ln" style="top:87px">3</div><svg style="left:65px;top:91px" width="11" height="7" fill="none" stroke="#c5c5c5" stroke-width="1.200"><path d="M0.500 0.500l5 5 5-5"/></svg><div class="abs ig" style="left:85.0px;top:86px;height:32px"></div><div class="abs ig" style="left:102.6px;top:86px;height:32px"></div><div class="abs cl" style="top:87px">    <span class="tg">&lt;view</span> class="<span class="st">date-container</span>"<span class="tg">&gt;</span></div><div class="abs ln" style="top:119px">4</div><div class="abs ig" style="left:85.0px;top:118px;height:32px"></div><div class="abs ig" style="left:102.6px;top:118px;height:32px"></div><div class="abs ig" style="left:120.1px;top:118px;height:32px"></div><div class="abs ig" style="left:137.7px;top:118px;height:32px"></div><div class="abs cl" style="top:119px">        <span class="tg">&lt;text</span> class="<span class="st">time</span>"<span class="tg">&gt;</span><span class="y">{</span><span class="p">{</span><span class="">time</span><span class="p">}</span><span class="y">}</span><span class="tg">&lt;/text&gt;</span></div><div class="abs ln" style="top:151px">5</div><div class="abs ig" style="left:85.0px;top:150px;height:32px"></div><div class="abs ig" style="left:102.6px;top:150px;height:32px"></div><div class="abs ig" style="left:120.1px;top:150px;height:32px"></div><div class="abs ig" style="left:137.7px;top:150px;height:32px"></div><div class="abs cl" style="top:151px">        <span class="tg">&lt;text</span> class="<span class="st">date</span>"<span class="tg">&gt;</span><span class="y">{</span><span class="p">{</span><span class="">date</span><span class="p">}</span><span class="y">}</span><span class="tg">&lt;/text&gt;</span></div><div class="abs ln" style="top:183px">6</div><div class="abs ig" style="left:85.0px;top:182px;height:32px"></div><div class="abs ig" style="left:102.6px;top:182px;height:32px"></div><div class="abs cl" style="top:183px">    <span class="tg">&lt;/view&gt;</span></div><div class="abs ln" style="top:215px">7</div><svg style="left:65px;top:219px" width="11" height="7" fill="none" stroke="#c5c5c5" stroke-width="1.200"><path d="M0.500 0.500l5 5 5-5"/></svg><div class="abs ig" style="left:85.0px;top:214px;height:32px"></div><div class="abs ig" style="left:102.6px;top:214px;height:32px"></div><div class="abs cl" style="top:215px">    <span class="tg">&lt;view</span> class="<span class="st">bottom-container</span>"<span class="tg">&gt;</span></div><div class="abs ln" style="top:247px">8</div><svg style="left:65px;top:251px" width="11" height="7" fill="none" stroke="#c5c5c5" stroke-width="1.200"><path d="M0.500 0.500l5 5 5-5"/></svg><div class="abs ig" style="left:85.0px;top:246px;height:32px"></div><div class="abs ig" style="left:102.6px;top:246px;height:32px"></div><div class="abs ig" style="left:120.1px;top:246px;height:32px"></div><div class="abs ig" style="left:137.7px;top:246px;height:32px"></div><div class="abs cl" style="top:247px">        <span class="tg">&lt;view</span> class="<span class="st">shareContainer</span>"<span class="tg">&gt;</span></div><div class="abs ln" style="top:279px">9</div><svg style="left:65px;top:283px" width="11" height="7" fill="none" stroke="#c5c5c5" stroke-width="1.200"><path d="M0.500 0.500l5 5 5-5"/></svg><div class="abs ig" style="left:85.0px;top:278px;height:32px"></div><div class="abs ig" style="left:102.6px;top:278px;height:32px"></div><div class="abs ig" style="left:120.1px;top:278px;height:32px"></div><div class="abs ig" style="left:137.7px;top:278px;height:32px"></div><div class="abs ig" style="left:155.2px;top:278px;height:32px"></div><div class="abs ig" style="left:172.8px;top:278px;height:32px"></div><div class="abs cl" style="top:279px">            <span class="tg">&lt;view</span> class="<span class="st">sharebtnView</span>"<span class="tg">&gt;</span></div><div class="abs ln" style="top:311px">10</div><div class="abs ig" style="left:85.0px;top:310px;height:32px"></div><div class="abs ig" style="left:102.6px;top:310px;height:32px"></div><div class="abs ig" style="left:120.1px;top:310px;height:32px"></div><div class="abs ig" style="left:137.7px;top:310px;height:32px"></div><div class="abs ig" style="left:155.2px;top:310px;height:32px"></div><div class="abs ig" style="left:172.8px;top:310px;height:32px"></div><div class="abs ig" style="left:190.4px;top:310px;height:32px"></div><div class="abs ig" style="left:207.9px;top:310px;height:32px"></div><div class="abs cl" style="top:311px">                <span class="tg">&lt;image</span> class="<span class="st">share</span>" src="<span class="st u">../../images/share.png</span>"<span class="tg">&gt;&lt;/image&gt;</span></div><div class="abs ln" style="top:343px">11</div><div class="abs ig" style="left:85.0px;top:342px;height:32px"></div><div class="abs ig" style="left:102.6px;top:342px;height:32px"></div><div class="abs ig" style="left:120.1px;top:342px;height:32px"></div><div class="abs ig" style="left:137.7px;top:342px;height:32px"></div><div class="abs ig" style="left:155.2px;top:342px;height:32px"></div><div class="abs ig" style="left:172.8px;top:342px;height:32px"></div><div class="abs ig" style="left:190.4px;top:342px;height:32px"></div><div class="abs ig" style="left:207.9px;top:342px;height:32px"></div><div class="abs cl" style="top:343px">                <span class="tg">&lt;text&gt;</span><span style="font-size:16px">分享</span><span class="tg">&lt;/text&gt;</span></div><div class="abs ln" style="top:375px">12</div><div class="abs ig" style="left:85.0px;top:374px;height:32px"></div><div class="abs ig" style="left:102.6px;top:374px;height:32px"></div><div class="abs ig" style="left:120.1px;top:374px;height:32px"></div><div class="abs ig" style="left:137.7px;top:374px;height:32px"></div><div class="abs ig" style="left:155.2px;top:374px;height:32px"></div><div class="abs ig" style="left:172.8px;top:374px;height:32px"></div><div class="abs cl" style="top:375px">            <span class="tg">&lt;/view&gt;</span></div><div class="abs ln" style="top:407px">13</div><div class="abs ig" style="left:85.0px;top:406px;height:32px"></div><div class="abs ig" style="left:102.6px;top:406px;height:32px"></div><div class="abs ig" style="left:120.1px;top:406px;height:32px"></div><div class="abs ig" style="left:137.7px;top:406px;height:32px"></div><div class="abs ig" style="left:155.2px;top:406px;height:32px"></div><div class="abs ig" style="left:172.8px;top:406px;height:32px"></div><div class="abs cl" style="top:407px">            <span class="tg">&lt;button</span> class="<span class="st">shareButton</span>" openType="<span class="st">share</span>"<span class="tg">&gt;&lt;/button&gt;</span></div><div class="abs ln" style="top:439px">14</div><div class="abs ig" style="left:85.0px;top:438px;height:32px"></div><div class="abs ig" style="left:102.6px;top:438px;height:32px"></div><div class="abs ig" style="left:120.1px;top:438px;height:32px"></div><div class="abs ig" style="left:137.7px;top:438px;height:32px"></div><div class="abs cl" style="top:439px">        <span class="tg">&lt;/view&gt;</span></div><div class="abs ln" style="top:471px">15</div><div class="abs ig" style="left:85.0px;top:470px;height:32px"></div><div class="abs ig" style="left:102.6px;top:470px;height:32px"></div><div class="abs ig" style="left:120.1px;top:470px;height:32px"></div><div class="abs ig" style="left:137.7px;top:470px;height:32px"></div><div class="abs cl" style="top:471px">        <span class="tg">&lt;view</span> bindtap="<span class="st">downloadTap</span>" class="<span class="st">download-container</span>"<span class="tg">&gt;</span> <span style="font-size:16px">下载壁纸</span> <span class="tg">&lt;/view&gt;</span></div><div class="abs ln" style="top:503px">16</div><div class="abs ig" style="left:85.0px;top:502px;height:32px"></div><div class="abs ig" style="left:102.6px;top:502px;height:32px"></div><div class="abs cl" style="top:503px">    <span class="tg">&lt;/view&gt;</span></div><div class="abs ln" style="top:535px">17</div><div class="abs ig" style="left:85.0px;top:534px;height:32px"></div><div class="abs ig" style="left:102.6px;top:534px;height:32px"></div><div class="abs cl" style="top:535px">    <span class="tg">&lt;image</span> bindtap="<span class="st">backTap</span>" class="<span class="st">home</span>" src="<span class="st u">../../images/home.png</span>" wx:if="<span class="y">{</span><span class="p">{</span><span class="">isShare</span><span class="p">}</span><span class="y">}</span>"<span class="tg">&gt;&lt;/image&gt;</span></div><div class="abs ln" style="top:567px">18</div><div class="abs ig" style="left:85.0px;top:566px;height:32px"></div><div class="abs ig" style="left:102.6px;top:566px;height:32px"></div><div class="abs cl" style="top:567px">    <span class="tg">&lt;image</span> bindtap="<span class="st">backTap</span>" class="<span class="st">back</span>" src="<span class="st u">../../images/back.png</span>" wx:else<span class="tg">&gt;&lt;/image&gt;</span></div><div class="abs ln" style="top:599px">19</div><div class="abs cl" style="top:599px"><span class="tg">&lt;/view&gt;</span></div><div class="abs" style="left:84.500px;top:22px;width:9.500px;height:32px;border:1px solid #7a7a7a;background:rgba(60,90,60,.25)"></div><div class="abs" style="left:286px;top:22px;width:9.500px;height:32px;border:1px solid #7a7a7a;background:rgba(60,90,60,.25)"></div><div class="abs" style="left:1150px;top:22px;width:1px;height:606px;background:#383838"></div><div class="abs" style="left:1150px;top:22px;width:5px;height:301px;background:#474747"></div></div><div id="dbg" class="abs"><div class="t" style="left:20px;top:9px;font-size:11px;color:#9d9d9d;line-height:12px">调试器</div><div class="abs" style="left:62px;top:6px;width:45px;height:18px;border-radius:9px;background:#d0423d"></div><div class="t" style="left:62px;width:45px;text-align:center;top:9px;font-size:11px;color:#fff;line-height:12px">122, 11</div><div class="t" style="left:126px;top:9px;font-size:11px;color:#9d9d9d;line-height:12px">问题</div><div class="t" style="left:168px;top:9px;font-size:11px;color:#9d9d9d;line-height:12px">输出</div><div class="t" style="left:210px;top:9px;font-size:11px;color:#9d9d9d;line-height:12px">终端</div><div class="t" style="left:252px;top:9px;font-size:11px;color:#fff;line-height:12px">代码质量</div><div class="abs" style="left:252px;top:28px;width:44px;height:1px;background:#e0e0e0"></div><svg style="left:1100px;top:13px" width="11" height="7" fill="none" stroke="#d0d0d0" stroke-width="1.200"><path d="M0.500 6l5-5 5 5"/></svg><svg style="left:1133px;top:12px" width="10" height="10" fill="none" stroke="#d0d0d0" stroke-width="1.200"><path d="M0.500 0.500l9 9M9.500 0.500l-9 9"/></svg><div class="t" style="left:40px;top:72px;font-size:17px;color:#fff;line-height:18px">代码质量</div><div class="t lk" style="left:116px;top:74px;font-size:13px;line-height:14px">重新扫描</div><div class="t" style="left:176px;top:74px;font-size:12.500px;color:#7a7a7a;line-height:14px">2023/04/19 08:49</div><div class="t" style="left:40px;top:122px;font-size:13px;font-weight:bold;color:#ddd;line-height:14px">代码包</div><div class="t" style="left:1077px;top:122px;font-size:13px;color:#777;line-height:14px">3 项</div><svg style="left:1108px;top:126px" width="11" height="7" fill="none" stroke="#777" stroke-width="1.100"><path d="M0.500 6l5-5 5 5"/></svg><div class="t" style="left:40px;top:155px;font-size:13px;color:#a8a8a8;line-height:14px">组件</div><div class="t" style="left:276px;top:155px;font-size:13px;color:#e6e6e6;line-height:14px">启用组件按需注入 <span class="lk">查看教程</span></div><div class="t" style="left:1082px;top:155px;font-size:13px;color:#f0524f;line-height:14px">未通过</div><div class="t" style="left:40px;top:189px;font-size:13px;color:#a8a8a8;line-height:14px">图片和音频资源</div><div class="t" style="left:276px;top:189px;font-size:13px;color:#e6e6e6;line-height:14px">图片和音频资源大小应不超过 200 K <span class="lk">查看教程</span></div><div class="t" style="left:1082px;top:189px;font-size:13px;color:#f0524f;line-height:14px">未通过</div><div class="t" style="left:40px;top:223px;font-size:13px;color:#a8a8a8;line-height:14px">插件</div><div class="t" style="left:276px;top:223px;font-size:13px;color:#e6e6e6;line-height:14px">不建议引用过大插件（大小超过 200 K） <span class="lk">查看教程</span></div><div class="t" style="left:1082px;top:223px;font-size:13px;color:#bbb;line-height:14px">已通过</div></div><div id="left" class="abs"></div></body></html>
